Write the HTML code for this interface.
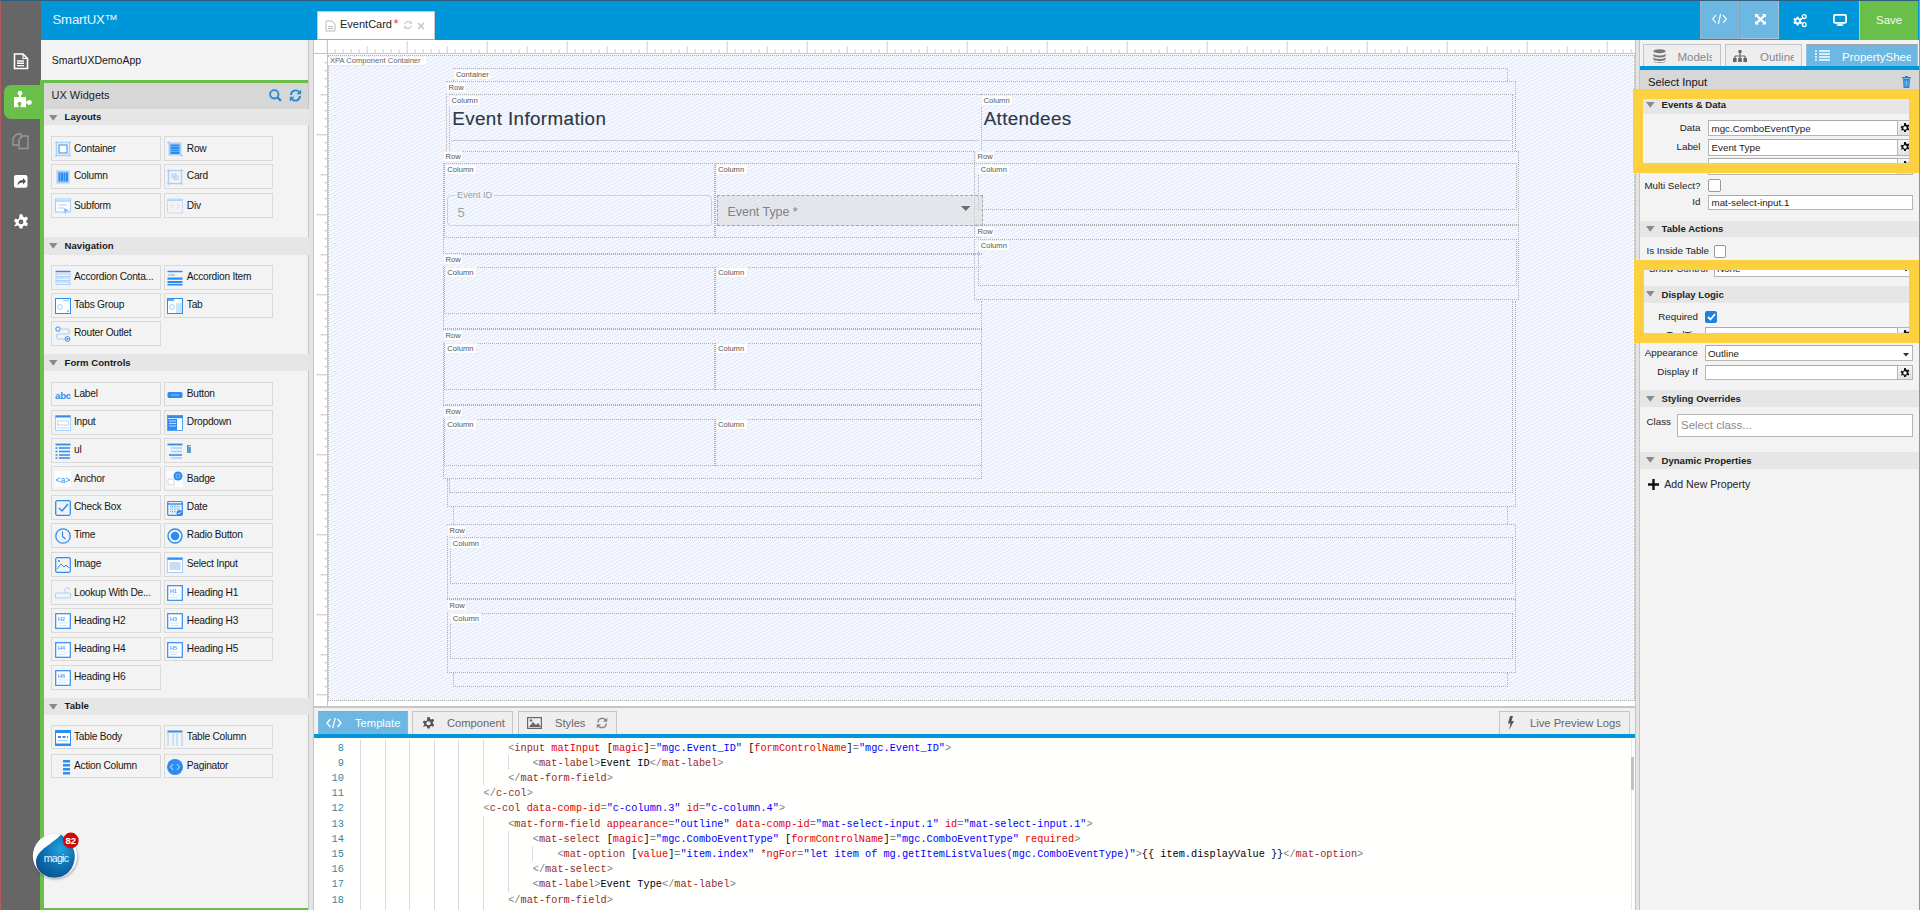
<!DOCTYPE html><html><head><meta charset="utf-8"><style>
*{margin:0;padding:0;box-sizing:border-box}
html,body{width:1920px;height:910px;overflow:hidden;background:#fff;font-family:"Liberation Sans",sans-serif}
.a{position:absolute}
.t{position:absolute;white-space:nowrap}
.m{position:absolute;white-space:pre;font-family:"Liberation Mono",monospace}
svg{position:absolute;overflow:visible}
</style></head><body><div class="a" style="left:0px;top:0px;width:40.5px;height:910px;background:#666;"></div>
<div class="a" style="left:0px;top:0px;width:1px;height:910px;background:#b75a5a;"></div>
<div class="a" style="left:40.5px;top:0px;width:1879.5px;height:40px;background:#0096da;"></div>
<div class="a" style="left:0px;top:0px;width:1920px;height:1px;background:#2f5f7e;"></div>
<div class="t" style="left:52.5px;top:12.83px;font-size:13.2px;line-height:13.2px;color:#e8f4fb;font-weight:normal;letter-spacing:-0.2px;">SmartUX™</div>
<div class="a" style="left:316.5px;top:11px;width:118.0px;height:29px;background:#fff;border:1px solid #c9c9c9;border-bottom:1px solid #aaa;"></div>
<svg style="left:325px;top:19.5px" width="11" height="12" viewBox="0 0 11 12"><path d="M1 1h6l3 3v7H1z" fill="none" stroke="#bbb" stroke-width="1"/><path d="M3 6.5h5M3 8.5h5" stroke="#bbb" stroke-width="1"/></svg>
<div class="t" style="left:340px;top:19.39px;font-size:11px;line-height:11px;color:#222;font-weight:normal;">EventCard</div>
<div class="t" style="left:393.5px;top:16.5px;font-size:13px;line-height:13px;color:#e0453a;font-weight:normal;">*</div>
<svg style="left:403px;top:20px" width="10" height="10" viewBox="0 0 10 10"><path d="M1.5 4.5A3.6 3.6 0 0 1 8 3M8.5 5.5A3.6 3.6 0 0 1 2 7" fill="none" stroke="#c8c8c8" stroke-width="1.3"/><path d="M8.8 0.8v3H5.8z" fill="#c8c8c8"/><path d="M1.2 9.2v-3h3z" fill="#c8c8c8"/></svg>
<svg style="left:417px;top:22px" width="8" height="8" viewBox="0 0 8 8"><path d="M1 1l6 6M7 1L1 7" stroke="#c4c4c4" stroke-width="1.6"/></svg>
<div class="a" style="left:1699.5px;top:1px;width:39.5px;height:37.5px;background:#6db8e2;border:1px solid #9ab3c2;border-top:none;"></div>
<div class="a" style="left:1739px;top:1px;width:40px;height:37.5px;background:#6db8e2;border:1px solid #a9c3d2;border-top:none;border-left:1.5px solid #9a9a9a;"></div>
<svg style="left:1712px;top:13px" width="15" height="12" viewBox="0 0 15 12"><path d="M4 2L0.8 6L4 10M11 2l3.2 4L11 10M8.6 0.8L6.4 11.2" fill="none" stroke="#fff" stroke-width="1.2"/></svg>
<svg style="left:1754.5px;top:13.8px" width="11" height="10.5" viewBox="0 0 11 10.5"><path d="M0 0h4.2L0 3.6zM11 0H6.8L11 3.6zM0 10.5h4.2L0 6.9zM11 10.5H6.8L11 6.9z" fill="#fff"/><path d="M1 1l9 8.5M10 1L1 9.5" stroke="#fff" stroke-width="2.3"/></svg>
<svg style="left:1792.5px;top:13.5px" width="15" height="13" viewBox="0 0 15 13"><g transform="translate(4.6 7) scale(0.36)"><path d="M-2.5-12h5l.8 3.6 2.6 1.5 3.5-1.2 2.5 4.3-2.8 2.5v3l2.8 2.5-2.5 4.3-3.5-1.2-2.6 1.5-.8 3.6h-5l-.8-3.6-2.6-1.5-3.5 1.2-2.5-4.3 2.8-2.5v-3l-2.8-2.5 2.5-4.3 3.5 1.2 2.6-1.5z" fill="#fff"/><circle r="4" fill="#0096da"/></g><circle cx="11.3" cy="2.6" r="1.9" fill="none" stroke="#fff" stroke-width="1.3"/><circle cx="11.3" cy="10.6" r="1.9" fill="none" stroke="#fff" stroke-width="1.3"/><path d="M7.5 5.5l2.3-1.6M7.5 8.3l2.3 1.4" stroke="#fff" stroke-width="1.2"/></svg>
<svg style="left:1833px;top:14px" width="14" height="12" viewBox="0 0 14 12"><rect x="0.9" y="0.9" width="12.2" height="8" rx="1.2" fill="none" stroke="#fff" stroke-width="1.8"/><rect x="5" y="9.5" width="4" height="1.5" fill="#fff"/><rect x="3.5" y="10.6" width="7" height="1.2" fill="#fff"/></svg>
<div class="a" style="left:1859px;top:1px;width:59px;height:39px;background:#6abf4b;border-left:1px solid #a8d890;"></div>
<div class="t" style="left:1876px;top:15.47px;font-size:11.5px;line-height:11.5px;color:#f4fbef;font-weight:normal;">Save</div>
<div class="a" style="left:1919px;top:0px;width:1px;height:910px;background:#8f8fc2;"></div>
<svg style="left:13px;top:53px" width="16" height="17" viewBox="0 0 16 17"><path d="M1.5 1h8.5l4.5 4.5V15.5H1.5z" fill="none" stroke="#fff" stroke-width="1.6"/><path d="M10 1v4.5h4.5" fill="none" stroke="#fff" stroke-width="1.2"/><path d="M4 8h7M4 10.3h7M4 12.6h7" stroke="#fff" stroke-width="1.4"/></svg>
<div class="a" style="left:3.7px;top:85px;width:39.3px;height:34px;background:#6abf4b;border-radius:7px 0 0 7px;"></div>
<svg style="left:8px;top:86px" width="30" height="30" viewBox="0 0 30 30"><rect x="6" y="11" width="12" height="10.2" fill="#fff"/><circle cx="12" cy="7.2" r="2.4" fill="#fff"/><rect x="11.1" y="8" width="1.8" height="3.5" fill="#fff"/><circle cx="21.4" cy="16.5" r="2.4" fill="#fff"/><rect x="17.5" y="15.6" width="3" height="1.8" fill="#fff"/><circle cx="11.5" cy="17.6" r="1.9" fill="#6abf4b"/><rect x="10.6" y="18" width="1.9" height="3.5" fill="#6abf4b"/></svg>
<svg style="left:12px;top:133px" width="18" height="17" viewBox="0 0 18 17"><path d="M1 5L5 1h4v4" fill="none" stroke="#9a9a9a" stroke-width="1.4"/><path d="M1 5v7h5" fill="none" stroke="#9a9a9a" stroke-width="1.4"/><path d="M7 6.5L10.5 3H16v12.5H7z" fill="none" stroke="#9a9a9a" stroke-width="1.4"/></svg>
<svg style="left:14px;top:174.5px" width="14" height="13" viewBox="0 0 14 13"><rect x="0" y="0" width="13.5" height="12.8" rx="2" fill="#fff"/><path d="M3.5 10.5C3.5 6.5 6 5 9 5V3l3 3.2-3 3.2V7.5C6.5 7.5 4.8 8.3 3.5 10.5z" fill="#555"/></svg>
<svg style="left:13px;top:213.5px" width="16" height="16" viewBox="0 0 16 16"><path d="M6.6 0h2.8l.5 2.2 1.6.9 2.1-.8 1.4 2.4-1.7 1.5v1.8l1.7 1.5-1.4 2.4-2.1-.8-1.6.9-.5 2.2H6.6l-.5-2.2-1.6-.9-2.1.8L1 11.5l1.7-1.5V8.2L1 6.7l1.4-2.4 2.1.8 1.6-.9z" fill="#fff" transform="translate(0 0.3)"/><circle cx="8" cy="7.9" r="2.4" fill="#666"/></svg>
<div class="a" style="left:40.5px;top:40px;width:268.0px;height:870px;background:#f3f3f3;"></div>
<div class="t" style="left:51.8px;top:54.81px;font-size:10.5px;line-height:10.5px;color:#161616;font-weight:normal;">SmartUXDemoApp</div>
<div class="a" style="left:40px;top:80px;width:268.5px;height:3px;background:#6abf4b;"></div>
<div class="a" style="left:40px;top:80px;width:3.5px;height:830px;background:#6abf4b;"></div>
<div class="a" style="left:40px;top:907.5px;width:268.5px;height:2.5px;background:#6abf4b;"></div>
<div class="a" style="left:43.5px;top:83px;width:265.0px;height:25.5px;background:#d7d7d7;"></div>
<div class="t" style="left:51.5px;top:89.89px;font-size:11px;line-height:11px;color:#1e1e1e;font-weight:normal;">UX Widgets</div>
<svg style="left:269px;top:88.5px" width="13" height="13" viewBox="0 0 13 13"><circle cx="5.3" cy="5.3" r="4.2" fill="none" stroke="#1f8ad6" stroke-width="1.8"/><path d="M8.3 8.3l3.6 3.6" stroke="#1f8ad6" stroke-width="2.2"/></svg>
<svg style="left:289px;top:88.5px" width="13" height="13" viewBox="0 0 13 13"><path d="M2 6A4.6 4.6 0 0 1 10.2 3.2M11 7A4.6 4.6 0 0 1 2.8 9.8" fill="none" stroke="#1f8ad6" stroke-width="1.9"/><path d="M12.2 0.6v4.6H7.6z" fill="#1f8ad6"/><path d="M0.8 12.4V7.8h4.6z" fill="#1f8ad6"/></svg>
<div class="a" style="left:308px;top:40px;width:5.5px;height:870px;background:#e4e4e4;border-left:1.5px solid #c4c4c4;border-right:1.5px solid #c4c4c4;"></div>
<div class="a" style="left:43.5px;top:108.5px;width:265.0px;height:16.9px;background:#e6e6e6;"></div>
<svg style="left:49px;top:114.5px" width="9" height="6" viewBox="0 0 9 6"><path d="M0 0h8.5L4.25 5.7z" fill="#8a8a8a"/></svg>
<div class="t" style="left:64.6px;top:112.27px;font-size:9.6px;line-height:9.6px;color:#1a1a1a;font-weight:bold;">Layouts</div>
<div class="a" style="left:51px;top:136.4px;width:109.5px;height:24.9px;border:1px solid #dadada;background:#f3f3f3;"></div>
<svg style="left:54.5px;top:141.4px" width="16" height="16" viewBox="0 0 16 16"><rect x="1.5" y="1.5" width="13" height="13" fill="none" stroke="#a9d0fb" stroke-width="1.4"/><rect x="4" y="4" width="8" height="8" fill="#fff" stroke="#2d8cf2" stroke-width="1"/><circle cx="1.5" cy="1.5" r="1.2" fill="#a9d0fb"/><circle cx="14.5" cy="1.5" r="1.2" fill="#a9d0fb"/><circle cx="1.5" cy="14.5" r="1.2" fill="#a9d0fb"/><circle cx="14.5" cy="14.5" r="1.2" fill="#a9d0fb"/></svg>
<div class="t" style="left:74px;top:143.67px;font-size:10.2px;line-height:10.2px;color:#161616;font-weight:normal;letter-spacing:-0.25px;">Container</div>
<div class="a" style="left:163.8px;top:136.4px;width:109.6px;height:24.9px;border:1px solid #dadada;background:#f3f3f3;"></div>
<svg style="left:167.3px;top:141.4px" width="16" height="16" viewBox="0 0 16 16"><rect x="1.5" y="1.5" width="13" height="13" fill="#a9d0fb"/><path d="M3.5 4.5h9M3.5 7h9M3.5 9.5h9M3.5 12h9" stroke="#2d8cf2" stroke-width="2"/><circle cx="1.5" cy="1.5" r="1.2" fill="#a9d0fb"/><circle cx="14.5" cy="14.5" r="1.2" fill="#a9d0fb"/></svg>
<div class="t" style="left:186.8px;top:143.67px;font-size:10.2px;line-height:10.2px;color:#161616;font-weight:normal;letter-spacing:-0.25px;">Row</div>
<div class="a" style="left:51px;top:164.2px;width:109.5px;height:24.9px;border:1px solid #dadada;background:#f3f3f3;"></div>
<svg style="left:54.5px;top:169.2px" width="16" height="16" viewBox="0 0 16 16"><rect x="1.5" y="1.5" width="13" height="13" fill="#a9d0fb"/><path d="M4.5 3.5v9M7 3.5v9M9.5 3.5v9M12 3.5v9" stroke="#2d8cf2" stroke-width="2"/></svg>
<div class="t" style="left:74px;top:171.47px;font-size:10.2px;line-height:10.2px;color:#161616;font-weight:normal;letter-spacing:-0.25px;">Column</div>
<div class="a" style="left:163.8px;top:164.2px;width:109.6px;height:24.9px;border:1px solid #dadada;background:#f3f3f3;"></div>
<svg style="left:167.3px;top:169.2px" width="16" height="16" viewBox="0 0 16 16"><rect x="1.5" y="1.5" width="13" height="13" fill="none" stroke="#a9d0fb" stroke-width="1.3"/><rect x="5" y="5" width="4" height="3.5" fill="none" stroke="#a9d0fb"/><rect x="7" y="7" width="4" height="3.5" fill="none" stroke="#a9d0fb"/><circle cx="1.5" cy="1.5" r="1.3" fill="#a9d0fb"/><circle cx="14.5" cy="1.5" r="1.3" fill="#a9d0fb"/><circle cx="1.5" cy="14.5" r="1.3" fill="#a9d0fb"/><circle cx="14.5" cy="14.5" r="1.3" fill="#a9d0fb"/></svg>
<div class="t" style="left:186.8px;top:171.47px;font-size:10.2px;line-height:10.2px;color:#161616;font-weight:normal;letter-spacing:-0.25px;">Card</div>
<div class="a" style="left:51px;top:193.4px;width:109.5px;height:24.9px;border:1px solid #dadada;background:#f3f3f3;"></div>
<svg style="left:54.5px;top:198.4px" width="16" height="16" viewBox="0 0 16 16"><rect x="0.5" y="1" width="15" height="13" fill="#fff" stroke="#a9d0fb" stroke-width="1.2"/><path d="M0.5 3h15" stroke="#a9d0fb" stroke-width="1.5"/><path d="M3 7h9M3 10h6" stroke="#a9d0fb" stroke-width="1"/><path d="M9 10l5 2.5-3 1-1 2.5z" fill="#2d8cf2" opacity=".6"/></svg>
<div class="t" style="left:74px;top:200.67px;font-size:10.2px;line-height:10.2px;color:#161616;font-weight:normal;letter-spacing:-0.25px;">Subform</div>
<div class="a" style="left:163.8px;top:193.4px;width:109.6px;height:24.9px;border:1px solid #dadada;background:#f3f3f3;"></div>
<svg style="left:167.3px;top:198.4px" width="16" height="16" viewBox="0 0 16 16"><rect x="0.5" y="1" width="15" height="14" fill="none" stroke="#a9d0fb" stroke-width="1" stroke-dasharray="1.5 1"/><path d="M0.5 2.2h15" stroke="#a9d0fb" stroke-width="1.5"/><path d="M6 6.5L4 8.5l2 2M10 6.5l2 2-2 2" fill="none" stroke="#c9b8f0" stroke-width=".8"/></svg>
<div class="t" style="left:186.8px;top:200.67px;font-size:10.2px;line-height:10.2px;color:#161616;font-weight:normal;letter-spacing:-0.25px;">Div</div>
<div class="a" style="left:43.5px;top:237.4px;width:265.0px;height:17.2px;background:#e6e6e6;"></div>
<svg style="left:49px;top:243.4px" width="9" height="6" viewBox="0 0 9 6"><path d="M0 0h8.5L4.25 5.7z" fill="#8a8a8a"/></svg>
<div class="t" style="left:64.6px;top:241.17px;font-size:9.6px;line-height:9.6px;color:#1a1a1a;font-weight:bold;">Navigation</div>
<div class="a" style="left:51px;top:265.2px;width:109.5px;height:24.9px;border:1px solid #dadada;background:#f3f3f3;"></div>
<svg style="left:54.5px;top:270.2px" width="16" height="16" viewBox="0 0 16 16"><path d="M0.5 1.5h15" stroke="#2d8cf2" stroke-width="1.5"/><rect x="1" y="4" width="14" height="2.5" fill="none" stroke="#a9d0fb"/><rect x="1" y="8" width="14" height="2.5" fill="none" stroke="#a9d0fb"/><rect x="1" y="12" width="14" height="2.5" fill="none" stroke="#a9d0fb"/></svg>
<div class="t" style="left:74px;top:272.47px;font-size:10.2px;line-height:10.2px;color:#161616;font-weight:normal;letter-spacing:-0.25px;">Accordion Conta...</div>
<div class="a" style="left:163.8px;top:265.2px;width:109.6px;height:24.9px;border:1px solid #dadada;background:#f3f3f3;"></div>
<svg style="left:167.3px;top:270.2px" width="16" height="16" viewBox="0 0 16 16"><path d="M0.5 1.5h15" stroke="#2d8cf2" stroke-width="1.5"/><rect x="1" y="4" width="7" height="2" fill="#a9d0fb"/><rect x="0.5" y="7.5" width="15" height="2.2" fill="#2d8cf2"/><rect x="0.5" y="11" width="15" height="2.2" fill="#2d8cf2"/><rect x="0.5" y="14" width="15" height="1.5" fill="#2d8cf2"/></svg>
<div class="t" style="left:186.8px;top:272.47px;font-size:10.2px;line-height:10.2px;color:#161616;font-weight:normal;letter-spacing:-0.25px;">Accordion Item</div>
<div class="a" style="left:51px;top:293.2px;width:109.5px;height:24.9px;border:1px solid #dadada;background:#f3f3f3;"></div>
<svg style="left:54.5px;top:298.2px" width="16" height="16" viewBox="0 0 16 16"><rect x="0.5" y="0.5" width="15" height="15" fill="#fff" stroke="#2d8cf2" stroke-width="1"/><path d="M8 2.5h6" stroke="#a9d0fb" stroke-width="1.4"/><circle cx="5" cy="9" r="2.5" fill="none" stroke="#a9d0fb"/><path d="M12 13h2" stroke="#2d8cf2"/></svg>
<div class="t" style="left:74px;top:300.47px;font-size:10.2px;line-height:10.2px;color:#161616;font-weight:normal;letter-spacing:-0.25px;">Tabs Group</div>
<div class="a" style="left:163.8px;top:293.2px;width:109.6px;height:24.9px;border:1px solid #dadada;background:#f3f3f3;"></div>
<svg style="left:167.3px;top:298.2px" width="16" height="16" viewBox="0 0 16 16"><rect x="0.5" y="0.5" width="15" height="15" fill="#fff" stroke="#2d8cf2" stroke-width="1"/><path d="M1 2h6" stroke="#2d8cf2" stroke-width="1.5"/><circle cx="5" cy="9" r="2.5" fill="none" stroke="#a9d0fb"/><rect x="9" y="5" width="6" height="10" fill="#a9d0fb" opacity=".6"/></svg>
<div class="t" style="left:186.8px;top:300.47px;font-size:10.2px;line-height:10.2px;color:#161616;font-weight:normal;letter-spacing:-0.25px;">Tab</div>
<div class="a" style="left:51px;top:321.2px;width:109.5px;height:24.9px;border:1px solid #dadada;background:#f3f3f3;"></div>
<svg style="left:54.5px;top:326.2px" width="16" height="16" viewBox="0 0 16 16"><circle cx="3" cy="3" r="2.2" fill="none" stroke="#2d8cf2"/><path d="M5 3h7a2.5 2.5 0 0 1 0 5H4a2.5 2.5 0 0 0 0 5h6" fill="none" stroke="#a9d0fb" stroke-width="1.1"/><circle cx="12.5" cy="13" r="2.4" fill="none" stroke="#2d8cf2"/><circle cx="12.5" cy="13" r="1" fill="#2d8cf2"/></svg>
<div class="t" style="left:74px;top:328.47px;font-size:10.2px;line-height:10.2px;color:#161616;font-weight:normal;letter-spacing:-0.25px;">Router Outlet</div>
<div class="a" style="left:43.5px;top:354.1px;width:265.0px;height:17.2px;background:#e6e6e6;"></div>
<svg style="left:49px;top:360.1px" width="9" height="6" viewBox="0 0 9 6"><path d="M0 0h8.5L4.25 5.7z" fill="#8a8a8a"/></svg>
<div class="t" style="left:64.6px;top:357.87px;font-size:9.6px;line-height:9.6px;color:#1a1a1a;font-weight:bold;">Form Controls</div>
<div class="a" style="left:51px;top:381.5px;width:109.5px;height:24.9px;border:1px solid #dadada;background:#f3f3f3;"></div>
<svg style="left:54.5px;top:386.5px" width="16" height="16" viewBox="0 0 16 16"><text x="0" y="12.3" font-family="Liberation Sans" font-weight="bold" font-size="9.6" fill="#2d8cf2" letter-spacing="-0.2">abc</text></svg>
<div class="t" style="left:74px;top:388.77px;font-size:10.2px;line-height:10.2px;color:#161616;font-weight:normal;letter-spacing:-0.25px;">Label</div>
<div class="a" style="left:163.8px;top:381.5px;width:109.6px;height:24.9px;border:1px solid #dadada;background:#f3f3f3;"></div>
<svg style="left:167.3px;top:386.5px" width="16" height="16" viewBox="0 0 16 16"><rect x="0.5" y="5" width="15" height="6" rx="1.5" fill="#2d8cf2"/><path d="M4 8h8" stroke="#a9d0fb" stroke-width=".8"/></svg>
<div class="t" style="left:186.8px;top:388.77px;font-size:10.2px;line-height:10.2px;color:#161616;font-weight:normal;letter-spacing:-0.25px;">Button</div>
<div class="a" style="left:51px;top:410px;width:109.5px;height:24.9px;border:1px solid #dadada;background:#f3f3f3;"></div>
<svg style="left:54.5px;top:415px" width="16" height="16" viewBox="0 0 16 16"><rect x="0.5" y="0.5" width="15" height="15" fill="#fff" stroke="#a9d0fb" stroke-width="1"/><path d="M0.5 1.5h15" stroke="#2d8cf2" stroke-width="2"/><rect x="2.5" y="6" width="11" height="4" fill="none" stroke="#a9d0fb" stroke-width=".8"/><path d="M2 13h12" stroke="#a9d0fb" stroke-width=".8"/></svg>
<div class="t" style="left:74px;top:417.27px;font-size:10.2px;line-height:10.2px;color:#161616;font-weight:normal;letter-spacing:-0.25px;">Input</div>
<div class="a" style="left:163.8px;top:410px;width:109.6px;height:24.9px;border:1px solid #dadada;background:#f3f3f3;"></div>
<svg style="left:167.3px;top:415px" width="16" height="16" viewBox="0 0 16 16"><rect x="0.5" y="0.5" width="15" height="15" fill="#fff" stroke="#2d8cf2" stroke-width=".8"/><path d="M0.5 2h15" stroke="#2d8cf2" stroke-width="2.5"/><rect x="1" y="4" width="9" height="11" fill="#2d8cf2"/><path d="M2 6h7M2 8.5h7M2 11h7" stroke="#fff" stroke-width=".7"/></svg>
<div class="t" style="left:186.8px;top:417.27px;font-size:10.2px;line-height:10.2px;color:#161616;font-weight:normal;letter-spacing:-0.25px;">Dropdown</div>
<div class="a" style="left:51px;top:438.2px;width:109.5px;height:24.9px;border:1px solid #dadada;background:#f3f3f3;"></div>
<svg style="left:54.5px;top:443.2px" width="16" height="16" viewBox="0 0 16 16"><path d="M0.5 1.5h15" stroke="#2d8cf2" stroke-width="1.8"/><path d="M4 5h11M4 8.5h11M4 12h11M4 15h11" stroke="#2d8cf2" stroke-width="1.6"/><path d="M0.5 5h2M0.5 8.5h2M0.5 12h2M0.5 15h2" stroke="#2d8cf2" stroke-width="1.6"/></svg>
<div class="t" style="left:74px;top:445.47px;font-size:10.2px;line-height:10.2px;color:#161616;font-weight:normal;letter-spacing:-0.25px;">ul</div>
<div class="a" style="left:163.8px;top:438.2px;width:109.6px;height:24.9px;border:1px solid #dadada;background:#f3f3f3;"></div>
<svg style="left:167.3px;top:443.2px" width="16" height="16" viewBox="0 0 16 16"><path d="M0.5 1.5h15" stroke="#2d8cf2" stroke-width="1.8"/><path d="M4 5h11M4 8.5h11M4 15h11" stroke="#a9d0fb" stroke-width="1.4"/><path d="M2 12h13" stroke="#2d8cf2" stroke-width="1.6"/></svg>
<div class="t" style="left:186.8px;top:445.47px;font-size:10.2px;line-height:10.2px;color:#161616;font-weight:normal;letter-spacing:-0.25px;">li</div>
<div class="a" style="left:51px;top:466.3px;width:109.5px;height:24.9px;border:1px solid #dadada;background:#f3f3f3;"></div>
<svg style="left:54.5px;top:471.3px" width="16" height="16" viewBox="0 0 16 16"><rect x="0" y="0" width="16" height="16" fill="#fff"/><text x="0.5" y="11.5" font-family="Liberation Sans" font-size="8.5" fill="#2d8cf2">&lt;a&gt;</text></svg>
<div class="t" style="left:74px;top:473.57px;font-size:10.2px;line-height:10.2px;color:#161616;font-weight:normal;letter-spacing:-0.25px;">Anchor</div>
<div class="a" style="left:163.8px;top:466.3px;width:109.6px;height:24.9px;border:1px solid #dadada;background:#f3f3f3;"></div>
<svg style="left:167.3px;top:471.3px" width="16" height="16" viewBox="0 0 16 16"><rect x="0" y="0" width="16" height="16" fill="#fff"/><rect x="1" y="8" width="6" height="6" fill="none" stroke="#ccc" stroke-width=".8"/><circle cx="11" cy="5" r="4.5" fill="#2d8cf2"/><circle cx="11" cy="5" r="2" fill="none" stroke="#a9d0fb" stroke-width=".7"/></svg>
<div class="t" style="left:186.8px;top:473.57px;font-size:10.2px;line-height:10.2px;color:#161616;font-weight:normal;letter-spacing:-0.25px;">Badge</div>
<div class="a" style="left:51px;top:494.9px;width:109.5px;height:24.9px;border:1px solid #dadada;background:#f3f3f3;"></div>
<svg style="left:54.5px;top:499.9px" width="16" height="16" viewBox="0 0 16 16"><rect x="0.7" y="0.7" width="14.6" height="14.6" rx="1.5" fill="none" stroke="#2d8cf2" stroke-width="1.3"/><path d="M4 8l3 3 6-7" fill="none" stroke="#2d8cf2" stroke-width="1.5"/></svg>
<div class="t" style="left:74px;top:502.17px;font-size:10.2px;line-height:10.2px;color:#161616;font-weight:normal;letter-spacing:-0.25px;">Check Box</div>
<div class="a" style="left:163.8px;top:494.9px;width:109.6px;height:24.9px;border:1px solid #dadada;background:#f3f3f3;"></div>
<svg style="left:167.3px;top:499.9px" width="16" height="16" viewBox="0 0 16 16"><rect x="0.7" y="1.5" width="14.6" height="13.8" rx="1" fill="none" stroke="#2d8cf2" stroke-width="1.2"/><path d="M0.7 4h14.6" stroke="#2d8cf2" stroke-width="1.4"/><path d="M3 6.5h10M3 9h10M3 11.5h6M5 5v9M8 5v9M11 5v5" stroke="#2d8cf2" stroke-width=".7" stroke-dasharray="1 1.2"/><circle cx="12.5" cy="13" r="3" fill="#2d8cf2"/><path d="M11 13l1 1 2-2" stroke="#fff" stroke-width=".8" fill="none"/></svg>
<div class="t" style="left:186.8px;top:502.17px;font-size:10.2px;line-height:10.2px;color:#161616;font-weight:normal;letter-spacing:-0.25px;">Date</div>
<div class="a" style="left:51px;top:523.2px;width:109.5px;height:24.9px;border:1px solid #dadada;background:#f3f3f3;"></div>
<svg style="left:54.5px;top:528.2px" width="16" height="16" viewBox="0 0 16 16"><circle cx="8" cy="8" r="7.2" fill="none" stroke="#2d8cf2" stroke-width="1.3"/><path d="M7.5 3.5V8.5l3 2.5" fill="none" stroke="#2d8cf2" stroke-width="1.2"/></svg>
<div class="t" style="left:74px;top:530.47px;font-size:10.2px;line-height:10.2px;color:#161616;font-weight:normal;letter-spacing:-0.25px;">Time</div>
<div class="a" style="left:163.8px;top:523.2px;width:109.6px;height:24.9px;border:1px solid #dadada;background:#f3f3f3;"></div>
<svg style="left:167.3px;top:528.2px" width="16" height="16" viewBox="0 0 16 16"><circle cx="8" cy="8" r="7" fill="none" stroke="#2d8cf2" stroke-width="1.4"/><circle cx="8" cy="8" r="4.3" fill="#2d8cf2"/></svg>
<div class="t" style="left:186.8px;top:530.47px;font-size:10.2px;line-height:10.2px;color:#161616;font-weight:normal;letter-spacing:-0.25px;">Radio Button</div>
<div class="a" style="left:51px;top:552px;width:109.5px;height:24.9px;border:1px solid #dadada;background:#f3f3f3;"></div>
<svg style="left:54.5px;top:557px" width="16" height="16" viewBox="0 0 16 16"><rect x="0.7" y="0.7" width="14.6" height="14.6" rx="1.5" fill="none" stroke="#2d8cf2" stroke-width="1.2"/><path d="M2 12l4-5 3 3 2-2 3 3" fill="none" stroke="#2d8cf2" stroke-width="1"/><circle cx="4" cy="4" r="1" fill="#2d8cf2"/></svg>
<div class="t" style="left:74px;top:559.27px;font-size:10.2px;line-height:10.2px;color:#161616;font-weight:normal;letter-spacing:-0.25px;">Image</div>
<div class="a" style="left:163.8px;top:552px;width:109.6px;height:24.9px;border:1px solid #dadada;background:#f3f3f3;"></div>
<svg style="left:167.3px;top:557px" width="16" height="16" viewBox="0 0 16 16"><rect x="0.5" y="0.5" width="15" height="15" fill="#fff" stroke="#a9d0fb" stroke-width="1"/><path d="M0.5 1.8h15" stroke="#2d8cf2" stroke-width="2"/><rect x="2.5" y="5" width="11" height="8" fill="#c7dcf5"/></svg>
<div class="t" style="left:186.8px;top:559.27px;font-size:10.2px;line-height:10.2px;color:#161616;font-weight:normal;letter-spacing:-0.25px;">Select Input</div>
<div class="a" style="left:51px;top:580.4px;width:109.5px;height:24.9px;border:1px solid #dadada;background:#f3f3f3;"></div>
<svg style="left:54.5px;top:585.4px" width="16" height="16" viewBox="0 0 16 16"><rect x="0.5" y="8" width="15" height="5" rx="1" fill="none" stroke="#a9d0fb" stroke-width="1.1"/><path d="M10 8V4l3-2 2 3" fill="none" stroke="#a9d0fb" stroke-width="1"/></svg>
<div class="t" style="left:74px;top:587.67px;font-size:10.2px;line-height:10.2px;color:#161616;font-weight:normal;letter-spacing:-0.25px;">Lookup With De...</div>
<div class="a" style="left:163.8px;top:580.4px;width:109.6px;height:24.9px;border:1px solid #dadada;background:#f3f3f3;"></div>
<svg style="left:167.3px;top:585.4px" width="16" height="16" viewBox="0 0 16 16"><rect x="0.7" y="0.7" width="14.6" height="14.6" fill="#fff" stroke="#2d8cf2" stroke-width="1.2"/><text x="3" y="7.5" font-family="Liberation Sans" font-weight="bold" font-size="5.5" fill="#2d8cf2" opacity=".8">H1</text><path d="M3 10h10M3 12.5h8" stroke="#d6e6f8" stroke-width="1"/></svg>
<div class="t" style="left:186.8px;top:587.67px;font-size:10.2px;line-height:10.2px;color:#161616;font-weight:normal;letter-spacing:-0.25px;">Heading H1</div>
<div class="a" style="left:51px;top:608.3px;width:109.5px;height:24.9px;border:1px solid #dadada;background:#f3f3f3;"></div>
<svg style="left:54.5px;top:613.3px" width="16" height="16" viewBox="0 0 16 16"><rect x="0.7" y="0.7" width="14.6" height="14.6" fill="#fff" stroke="#2d8cf2" stroke-width="1.2"/><text x="3" y="7.5" font-family="Liberation Sans" font-weight="bold" font-size="5.5" fill="#2d8cf2" opacity=".8">H2</text><path d="M3 10h10M3 12.5h8" stroke="#d6e6f8" stroke-width="1"/></svg>
<div class="t" style="left:74px;top:615.57px;font-size:10.2px;line-height:10.2px;color:#161616;font-weight:normal;letter-spacing:-0.25px;">Heading H2</div>
<div class="a" style="left:163.8px;top:608.3px;width:109.6px;height:24.9px;border:1px solid #dadada;background:#f3f3f3;"></div>
<svg style="left:167.3px;top:613.3px" width="16" height="16" viewBox="0 0 16 16"><rect x="0.7" y="0.7" width="14.6" height="14.6" fill="#fff" stroke="#2d8cf2" stroke-width="1.2"/><text x="3" y="7.5" font-family="Liberation Sans" font-weight="bold" font-size="5.5" fill="#2d8cf2" opacity=".8">H3</text><path d="M3 10h10M3 12.5h8" stroke="#d6e6f8" stroke-width="1"/></svg>
<div class="t" style="left:186.8px;top:615.57px;font-size:10.2px;line-height:10.2px;color:#161616;font-weight:normal;letter-spacing:-0.25px;">Heading H3</div>
<div class="a" style="left:51px;top:636.6px;width:109.5px;height:24.9px;border:1px solid #dadada;background:#f3f3f3;"></div>
<svg style="left:54.5px;top:641.6px" width="16" height="16" viewBox="0 0 16 16"><rect x="0.7" y="0.7" width="14.6" height="14.6" fill="#fff" stroke="#2d8cf2" stroke-width="1.2"/><text x="3" y="7.5" font-family="Liberation Sans" font-weight="bold" font-size="5.5" fill="#2d8cf2" opacity=".8">H4</text><path d="M3 10h10M3 12.5h8" stroke="#d6e6f8" stroke-width="1"/></svg>
<div class="t" style="left:74px;top:643.87px;font-size:10.2px;line-height:10.2px;color:#161616;font-weight:normal;letter-spacing:-0.25px;">Heading H4</div>
<div class="a" style="left:163.8px;top:636.6px;width:109.6px;height:24.9px;border:1px solid #dadada;background:#f3f3f3;"></div>
<svg style="left:167.3px;top:641.6px" width="16" height="16" viewBox="0 0 16 16"><rect x="0.7" y="0.7" width="14.6" height="14.6" fill="#fff" stroke="#2d8cf2" stroke-width="1.2"/><text x="3" y="7.5" font-family="Liberation Sans" font-weight="bold" font-size="5.5" fill="#2d8cf2" opacity=".8">H5</text><path d="M3 10h10M3 12.5h8" stroke="#d6e6f8" stroke-width="1"/></svg>
<div class="t" style="left:186.8px;top:643.87px;font-size:10.2px;line-height:10.2px;color:#161616;font-weight:normal;letter-spacing:-0.25px;">Heading H5</div>
<div class="a" style="left:51px;top:664.8px;width:109.5px;height:24.9px;border:1px solid #dadada;background:#f3f3f3;"></div>
<svg style="left:54.5px;top:669.8px" width="16" height="16" viewBox="0 0 16 16"><rect x="0.7" y="0.7" width="14.6" height="14.6" fill="#fff" stroke="#2d8cf2" stroke-width="1.2"/><text x="3" y="7.5" font-family="Liberation Sans" font-weight="bold" font-size="5.5" fill="#2d8cf2" opacity=".8">H6</text><path d="M3 10h10M3 12.5h8" stroke="#d6e6f8" stroke-width="1"/></svg>
<div class="t" style="left:74px;top:672.07px;font-size:10.2px;line-height:10.2px;color:#161616;font-weight:normal;letter-spacing:-0.25px;">Heading H6</div>
<div class="a" style="left:43.5px;top:697.7px;width:265.0px;height:17.7px;background:#e6e6e6;"></div>
<svg style="left:49px;top:703.7px" width="9" height="6" viewBox="0 0 9 6"><path d="M0 0h8.5L4.25 5.7z" fill="#8a8a8a"/></svg>
<div class="t" style="left:64.6px;top:701.47px;font-size:9.6px;line-height:9.6px;color:#1a1a1a;font-weight:bold;">Table</div>
<div class="a" style="left:51px;top:724.6px;width:109.5px;height:24.9px;border:1px solid #dadada;background:#f3f3f3;"></div>
<svg style="left:54.5px;top:729.6px" width="16" height="16" viewBox="0 0 16 16"><rect x="0.5" y="0.5" width="15" height="15" fill="#fff" stroke="#2d8cf2" stroke-width="1"/><path d="M0.5 2h15M0.5 14.5h15" stroke="#2d8cf2" stroke-width="2"/><path d="M3 7h10" stroke="#2d8cf2" stroke-width="2" stroke-dasharray="3 1.5"/><path d="M3 10.5h10" stroke="#a9d0fb" stroke-width="1.2"/></svg>
<div class="t" style="left:74px;top:731.87px;font-size:10.2px;line-height:10.2px;color:#161616;font-weight:normal;letter-spacing:-0.25px;">Table Body</div>
<div class="a" style="left:163.8px;top:724.6px;width:109.6px;height:24.9px;border:1px solid #dadada;background:#f3f3f3;"></div>
<svg style="left:167.3px;top:729.6px" width="16" height="16" viewBox="0 0 16 16"><path d="M0.5 1.5h15" stroke="#2d8cf2" stroke-width="2"/><path d="M1 2v14M6 2v14M10 2v14M15 2v14" stroke="#a9d0fb" stroke-width="1.1"/></svg>
<div class="t" style="left:186.8px;top:731.87px;font-size:10.2px;line-height:10.2px;color:#161616;font-weight:normal;letter-spacing:-0.25px;">Table Column</div>
<div class="a" style="left:51px;top:753.6px;width:109.5px;height:24.9px;border:1px solid #dadada;background:#f3f3f3;"></div>
<svg style="left:54.5px;top:758.6px" width="16" height="16" viewBox="0 0 16 16"><path d="M0.5 2h5M0.5 6h5M0.5 10h5M0.5 14h5" stroke="#e6eefb" stroke-width="1.2"/><rect x="8" y="1" width="7" height="2.5" fill="#2d8cf2"/><rect x="8" y="5" width="7" height="2.5" fill="#2d8cf2"/><rect x="8" y="9" width="7" height="2.5" fill="#2d8cf2"/><rect x="8" y="13" width="7" height="2.5" fill="#2d8cf2"/></svg>
<div class="t" style="left:74px;top:760.87px;font-size:10.2px;line-height:10.2px;color:#161616;font-weight:normal;letter-spacing:-0.25px;">Action Column</div>
<div class="a" style="left:163.8px;top:753.6px;width:109.6px;height:24.9px;border:1px solid #dadada;background:#f3f3f3;"></div>
<svg style="left:167.3px;top:758.6px" width="16" height="16" viewBox="0 0 16 16"><circle cx="8" cy="8" r="8" fill="#2d8cf2"/><path d="M6 5L3.5 8 6 11M10 5l2.5 3-2.5 3" fill="none" stroke="#cfe4fd" stroke-width="1"/></svg>
<div class="t" style="left:186.8px;top:760.87px;font-size:10.2px;line-height:10.2px;color:#161616;font-weight:normal;letter-spacing:-0.25px;">Paginator</div>
<svg style="left:31px;top:832px" width="50" height="50" viewBox="0 0 50 50"><defs><radialGradient id="mg" cx="0.62" cy="0.35" r="0.75"><stop offset="0" stop-color="#1ea3e0"/><stop offset="0.55" stop-color="#0f6fb0"/><stop offset="1" stop-color="#0a4f8c"/></radialGradient><filter id="sh" x="-20%" y="-20%" width="140%" height="140%"><feGaussianBlur stdDeviation="1.2"/></filter></defs><circle cx="24.5" cy="25" r="22.5" fill="#000" opacity=".28" filter="url(#sh)"/><circle cx="24" cy="24" r="22.2" fill="#fdfdfd"/><path d="M30 2.6C22 12 5 18 5 30C5 40 14 45.7 24 45.7C36 45.7 43.8 36 43.8 24C43.8 14 36 8 30 2.6z" fill="url(#mg)"/><text x="25" y="29.5" text-anchor="middle" font-family="Liberation Sans" font-size="10.5" fill="#f2f8fc" letter-spacing="-0.7">magic</text><circle cx="39.8" cy="8.5" r="7.9" fill="#cc0a0a"/><text x="39.8" y="12" text-anchor="middle" font-family="Liberation Sans" font-weight="bold" font-size="9.5" fill="#fff">82</text></svg>
<div class="a" style="left:313.5px;top:40px;width:1321.5px;height:666px;background:#fff;"></div>
<div class="a" style="left:327.5px;top:54.5px;width:1307.0px;height:646.5px;background:repeating-linear-gradient(151deg,#fdfdff 0px,#e3eafc 1.6px,#fdfdff 3.2px);"></div>
<div class="a" style="left:313.5px;top:53.3px;width:1321.5px;height:1.2px;background:#c4c4c4;"></div>
<div class="a" style="left:326.6px;top:40px;width:1.3px;height:666px;background:#c4c4c4;"></div>
<svg style="left:313.5px;top:40px" width="1322" height="14" viewBox="0 0 1322 14" fill="#cdcdcd"><rect x="12.70" y="1.30" width="1" height="12"/><rect x="20.70" y="9.30" width="1" height="4"/><rect x="28.70" y="9.30" width="1" height="4"/><rect x="36.70" y="9.30" width="1" height="4"/><rect x="44.70" y="9.30" width="1" height="4"/><rect x="52.70" y="6.30" width="1" height="7"/><rect x="60.70" y="9.30" width="1" height="4"/><rect x="68.70" y="9.30" width="1" height="4"/><rect x="76.70" y="9.30" width="1" height="4"/><rect x="84.70" y="9.30" width="1" height="4"/><rect x="92.70" y="1.30" width="1" height="12"/><rect x="100.70" y="9.30" width="1" height="4"/><rect x="108.70" y="9.30" width="1" height="4"/><rect x="116.70" y="9.30" width="1" height="4"/><rect x="124.70" y="9.30" width="1" height="4"/><rect x="132.70" y="6.30" width="1" height="7"/><rect x="140.70" y="9.30" width="1" height="4"/><rect x="148.70" y="9.30" width="1" height="4"/><rect x="156.70" y="9.30" width="1" height="4"/><rect x="164.70" y="9.30" width="1" height="4"/><rect x="172.70" y="1.30" width="1" height="12"/><rect x="180.70" y="9.30" width="1" height="4"/><rect x="188.70" y="9.30" width="1" height="4"/><rect x="196.70" y="9.30" width="1" height="4"/><rect x="204.70" y="9.30" width="1" height="4"/><rect x="212.70" y="6.30" width="1" height="7"/><rect x="220.70" y="9.30" width="1" height="4"/><rect x="228.70" y="9.30" width="1" height="4"/><rect x="236.70" y="9.30" width="1" height="4"/><rect x="244.70" y="9.30" width="1" height="4"/><rect x="252.70" y="1.30" width="1" height="12"/><rect x="260.70" y="9.30" width="1" height="4"/><rect x="268.70" y="9.30" width="1" height="4"/><rect x="276.70" y="9.30" width="1" height="4"/><rect x="284.70" y="9.30" width="1" height="4"/><rect x="292.70" y="6.30" width="1" height="7"/><rect x="300.70" y="9.30" width="1" height="4"/><rect x="308.70" y="9.30" width="1" height="4"/><rect x="316.70" y="9.30" width="1" height="4"/><rect x="324.70" y="9.30" width="1" height="4"/><rect x="332.70" y="1.30" width="1" height="12"/><rect x="340.70" y="9.30" width="1" height="4"/><rect x="348.70" y="9.30" width="1" height="4"/><rect x="356.70" y="9.30" width="1" height="4"/><rect x="364.70" y="9.30" width="1" height="4"/><rect x="372.70" y="6.30" width="1" height="7"/><rect x="380.70" y="9.30" width="1" height="4"/><rect x="388.70" y="9.30" width="1" height="4"/><rect x="396.70" y="9.30" width="1" height="4"/><rect x="404.70" y="9.30" width="1" height="4"/><rect x="412.70" y="1.30" width="1" height="12"/><rect x="420.70" y="9.30" width="1" height="4"/><rect x="428.70" y="9.30" width="1" height="4"/><rect x="436.70" y="9.30" width="1" height="4"/><rect x="444.70" y="9.30" width="1" height="4"/><rect x="452.70" y="6.30" width="1" height="7"/><rect x="460.70" y="9.30" width="1" height="4"/><rect x="468.70" y="9.30" width="1" height="4"/><rect x="476.70" y="9.30" width="1" height="4"/><rect x="484.70" y="9.30" width="1" height="4"/><rect x="492.70" y="1.30" width="1" height="12"/><rect x="500.70" y="9.30" width="1" height="4"/><rect x="508.70" y="9.30" width="1" height="4"/><rect x="516.70" y="9.30" width="1" height="4"/><rect x="524.70" y="9.30" width="1" height="4"/><rect x="532.70" y="6.30" width="1" height="7"/><rect x="540.70" y="9.30" width="1" height="4"/><rect x="548.70" y="9.30" width="1" height="4"/><rect x="556.70" y="9.30" width="1" height="4"/><rect x="564.70" y="9.30" width="1" height="4"/><rect x="572.70" y="1.30" width="1" height="12"/><rect x="580.70" y="9.30" width="1" height="4"/><rect x="588.70" y="9.30" width="1" height="4"/><rect x="596.70" y="9.30" width="1" height="4"/><rect x="604.70" y="9.30" width="1" height="4"/><rect x="612.70" y="6.30" width="1" height="7"/><rect x="620.70" y="9.30" width="1" height="4"/><rect x="628.70" y="9.30" width="1" height="4"/><rect x="636.70" y="9.30" width="1" height="4"/><rect x="644.70" y="9.30" width="1" height="4"/><rect x="652.70" y="1.30" width="1" height="12"/><rect x="660.70" y="9.30" width="1" height="4"/><rect x="668.70" y="9.30" width="1" height="4"/><rect x="676.70" y="9.30" width="1" height="4"/><rect x="684.70" y="9.30" width="1" height="4"/><rect x="692.70" y="6.30" width="1" height="7"/><rect x="700.70" y="9.30" width="1" height="4"/><rect x="708.70" y="9.30" width="1" height="4"/><rect x="716.70" y="9.30" width="1" height="4"/><rect x="724.70" y="9.30" width="1" height="4"/><rect x="732.70" y="1.30" width="1" height="12"/><rect x="740.70" y="9.30" width="1" height="4"/><rect x="748.70" y="9.30" width="1" height="4"/><rect x="756.70" y="9.30" width="1" height="4"/><rect x="764.70" y="9.30" width="1" height="4"/><rect x="772.70" y="6.30" width="1" height="7"/><rect x="780.70" y="9.30" width="1" height="4"/><rect x="788.70" y="9.30" width="1" height="4"/><rect x="796.70" y="9.30" width="1" height="4"/><rect x="804.70" y="9.30" width="1" height="4"/><rect x="812.70" y="1.30" width="1" height="12"/><rect x="820.70" y="9.30" width="1" height="4"/><rect x="828.70" y="9.30" width="1" height="4"/><rect x="836.70" y="9.30" width="1" height="4"/><rect x="844.70" y="9.30" width="1" height="4"/><rect x="852.70" y="6.30" width="1" height="7"/><rect x="860.70" y="9.30" width="1" height="4"/><rect x="868.70" y="9.30" width="1" height="4"/><rect x="876.70" y="9.30" width="1" height="4"/><rect x="884.70" y="9.30" width="1" height="4"/><rect x="892.70" y="1.30" width="1" height="12"/><rect x="900.70" y="9.30" width="1" height="4"/><rect x="908.70" y="9.30" width="1" height="4"/><rect x="916.70" y="9.30" width="1" height="4"/><rect x="924.70" y="9.30" width="1" height="4"/><rect x="932.70" y="6.30" width="1" height="7"/><rect x="940.70" y="9.30" width="1" height="4"/><rect x="948.70" y="9.30" width="1" height="4"/><rect x="956.70" y="9.30" width="1" height="4"/><rect x="964.70" y="9.30" width="1" height="4"/><rect x="972.70" y="1.30" width="1" height="12"/><rect x="980.70" y="9.30" width="1" height="4"/><rect x="988.70" y="9.30" width="1" height="4"/><rect x="996.70" y="9.30" width="1" height="4"/><rect x="1004.70" y="9.30" width="1" height="4"/><rect x="1012.70" y="6.30" width="1" height="7"/><rect x="1020.70" y="9.30" width="1" height="4"/><rect x="1028.70" y="9.30" width="1" height="4"/><rect x="1036.70" y="9.30" width="1" height="4"/><rect x="1044.70" y="9.30" width="1" height="4"/><rect x="1052.70" y="1.30" width="1" height="12"/><rect x="1060.70" y="9.30" width="1" height="4"/><rect x="1068.70" y="9.30" width="1" height="4"/><rect x="1076.70" y="9.30" width="1" height="4"/><rect x="1084.70" y="9.30" width="1" height="4"/><rect x="1092.70" y="6.30" width="1" height="7"/><rect x="1100.70" y="9.30" width="1" height="4"/><rect x="1108.70" y="9.30" width="1" height="4"/><rect x="1116.70" y="9.30" width="1" height="4"/><rect x="1124.70" y="9.30" width="1" height="4"/><rect x="1132.70" y="1.30" width="1" height="12"/><rect x="1140.70" y="9.30" width="1" height="4"/><rect x="1148.70" y="9.30" width="1" height="4"/><rect x="1156.70" y="9.30" width="1" height="4"/><rect x="1164.70" y="9.30" width="1" height="4"/><rect x="1172.70" y="6.30" width="1" height="7"/><rect x="1180.70" y="9.30" width="1" height="4"/><rect x="1188.70" y="9.30" width="1" height="4"/><rect x="1196.70" y="9.30" width="1" height="4"/><rect x="1204.70" y="9.30" width="1" height="4"/><rect x="1212.70" y="1.30" width="1" height="12"/><rect x="1220.70" y="9.30" width="1" height="4"/><rect x="1228.70" y="9.30" width="1" height="4"/><rect x="1236.70" y="9.30" width="1" height="4"/><rect x="1244.70" y="9.30" width="1" height="4"/><rect x="1252.70" y="6.30" width="1" height="7"/><rect x="1260.70" y="9.30" width="1" height="4"/><rect x="1268.70" y="9.30" width="1" height="4"/><rect x="1276.70" y="9.30" width="1" height="4"/><rect x="1284.70" y="9.30" width="1" height="4"/><rect x="1292.70" y="1.30" width="1" height="12"/><rect x="1300.70" y="9.30" width="1" height="4"/><rect x="1308.70" y="9.30" width="1" height="4"/><rect x="1316.70" y="9.30" width="1" height="4"/></svg>
<svg style="left:313.5px;top:54px" width="14" height="652" viewBox="0 0 14 652" fill="#c4c4c4"><rect x="10.30" y="8.30" width="3" height="1"/><rect x="10.30" y="16.30" width="3" height="1"/><rect x="10.30" y="24.30" width="3" height="1"/><rect x="10.30" y="32.30" width="3" height="1"/><rect x="6.30" y="40.30" width="7" height="1"/><rect x="10.30" y="48.30" width="3" height="1"/><rect x="10.30" y="56.30" width="3" height="1"/><rect x="10.30" y="64.30" width="3" height="1"/><rect x="10.30" y="72.30" width="3" height="1"/><rect x="2.30" y="80.30" width="11" height="1"/><rect x="10.30" y="88.30" width="3" height="1"/><rect x="10.30" y="96.30" width="3" height="1"/><rect x="10.30" y="104.30" width="3" height="1"/><rect x="10.30" y="112.30" width="3" height="1"/><rect x="6.30" y="120.30" width="7" height="1"/><rect x="10.30" y="128.30" width="3" height="1"/><rect x="10.30" y="136.30" width="3" height="1"/><rect x="10.30" y="144.30" width="3" height="1"/><rect x="10.30" y="152.30" width="3" height="1"/><rect x="2.30" y="160.30" width="11" height="1"/><rect x="10.30" y="168.30" width="3" height="1"/><rect x="10.30" y="176.30" width="3" height="1"/><rect x="10.30" y="184.30" width="3" height="1"/><rect x="10.30" y="192.30" width="3" height="1"/><rect x="6.30" y="200.30" width="7" height="1"/><rect x="10.30" y="208.30" width="3" height="1"/><rect x="10.30" y="216.30" width="3" height="1"/><rect x="10.30" y="224.30" width="3" height="1"/><rect x="10.30" y="232.30" width="3" height="1"/><rect x="2.30" y="240.30" width="11" height="1"/><rect x="10.30" y="248.30" width="3" height="1"/><rect x="10.30" y="256.30" width="3" height="1"/><rect x="10.30" y="264.30" width="3" height="1"/><rect x="10.30" y="272.30" width="3" height="1"/><rect x="6.30" y="280.30" width="7" height="1"/><rect x="10.30" y="288.30" width="3" height="1"/><rect x="10.30" y="296.30" width="3" height="1"/><rect x="10.30" y="304.30" width="3" height="1"/><rect x="10.30" y="312.30" width="3" height="1"/><rect x="2.30" y="320.30" width="11" height="1"/><rect x="10.30" y="328.30" width="3" height="1"/><rect x="10.30" y="336.30" width="3" height="1"/><rect x="10.30" y="344.30" width="3" height="1"/><rect x="10.30" y="352.30" width="3" height="1"/><rect x="6.30" y="360.30" width="7" height="1"/><rect x="10.30" y="368.30" width="3" height="1"/><rect x="10.30" y="376.30" width="3" height="1"/><rect x="10.30" y="384.30" width="3" height="1"/><rect x="10.30" y="392.30" width="3" height="1"/><rect x="2.30" y="400.30" width="11" height="1"/><rect x="10.30" y="408.30" width="3" height="1"/><rect x="10.30" y="416.30" width="3" height="1"/><rect x="10.30" y="424.30" width="3" height="1"/><rect x="10.30" y="432.30" width="3" height="1"/><rect x="6.30" y="440.30" width="7" height="1"/><rect x="10.30" y="448.30" width="3" height="1"/><rect x="10.30" y="456.30" width="3" height="1"/><rect x="10.30" y="464.30" width="3" height="1"/><rect x="10.30" y="472.30" width="3" height="1"/><rect x="2.30" y="480.30" width="11" height="1"/><rect x="10.30" y="488.30" width="3" height="1"/><rect x="10.30" y="496.30" width="3" height="1"/><rect x="10.30" y="504.30" width="3" height="1"/><rect x="10.30" y="512.30" width="3" height="1"/><rect x="6.30" y="520.30" width="7" height="1"/><rect x="10.30" y="528.30" width="3" height="1"/><rect x="10.30" y="536.30" width="3" height="1"/><rect x="10.30" y="544.30" width="3" height="1"/><rect x="10.30" y="552.30" width="3" height="1"/><rect x="2.30" y="560.30" width="11" height="1"/><rect x="10.30" y="568.30" width="3" height="1"/><rect x="10.30" y="576.30" width="3" height="1"/><rect x="10.30" y="584.30" width="3" height="1"/><rect x="10.30" y="592.30" width="3" height="1"/><rect x="6.30" y="600.30" width="7" height="1"/><rect x="10.30" y="608.30" width="3" height="1"/><rect x="10.30" y="616.30" width="3" height="1"/><rect x="10.30" y="624.30" width="3" height="1"/><rect x="10.30" y="632.30" width="3" height="1"/><rect x="2.30" y="640.30" width="11" height="1"/></svg>
<div class="a" style="left:313.5px;top:705.5px;width:1321.5px;height:2.5px;background:#c6c6c6;"></div>
<div class="a" style="left:1634.5px;top:40px;width:5.5px;height:870px;background:#e4e4e4;border-left:1.5px solid #c4c4c4;border-right:1.5px solid #c4c4c4;"></div>
<div class="a" style="left:327.5px;top:55px;width:1307.0px;height:646px;border-top:1px dotted #b0b0b0;border-left:1px dotted #b0b0b0;border-right:1px dotted #b0b0b0;border-bottom:1px dotted #b0b0b0;"></div>
<div class="a" style="left:328px;top:56.5px;width:97.6px;height:9.3px;background:#fff;border-bottom:1px solid #e6eaf5;"></div>
<div class="t" style="left:330px;top:57.17px;font-size:7.6px;line-height:7.6px;color:#666;font-weight:normal;">XPA Component Container</div>
<div class="a" style="left:453.4px;top:68.2px;width:1054.9px;height:12.8px;border-top:1px dotted #b0b0b0;border-left:1px dotted #b0b0b0;border-right:1px dotted #b0b0b0;"></div>
<div class="a" style="left:453.4px;top:68.5px;width:38.0px;height:11.0px;background:#fff;border:1px solid #eef0f5;"></div>
<div class="t" style="left:455.9px;top:70.67px;font-size:7.6px;line-height:7.6px;color:#555;font-weight:normal;">Container</div>
<div class="a" style="left:453.4px;top:507px;width:1054.9px;height:17px;border-left:1px dotted #b0b0b0;border-right:1px dotted #b0b0b0;"></div>
<div class="a" style="left:453.4px;top:673px;width:1054.9px;height:14px;border-left:1px dotted #b0b0b0;border-right:1px dotted #b0b0b0;border-bottom:1px dotted #b0b0b0;"></div>
<div class="a" style="left:446px;top:81px;width:1069.5px;height:69.5px;border-top:1px dotted #b0b0b0;border-left:1px dotted #b0b0b0;border-right:1px dotted #b0b0b0;"></div>
<div class="a" style="left:446px;top:81.5px;width:20px;height:11.0px;background:#fff;border:1px solid #eef0f5;"></div>
<div class="t" style="left:448.5px;top:83.67px;font-size:7.6px;line-height:7.6px;color:#555;font-weight:normal;">Row</div>
<div class="a" style="left:449px;top:94.3px;width:531.5px;height:56.2px;border-top:1px dotted #b0b0b0;border-left:1px dotted #b0b0b0;"></div>
<div class="a" style="left:449px;top:94.5px;width:32px;height:11.0px;background:#fff;border:1px solid #eef0f5;"></div>
<div class="t" style="left:451.5px;top:96.67px;font-size:7.6px;line-height:7.6px;color:#555;font-weight:normal;">Column</div>
<div class="a" style="left:980.5px;top:94.3px;width:532.5px;height:56.2px;border-top:1px dotted #b0b0b0;border-left:1px dotted #b0b0b0;border-right:1px dotted #b0b0b0;"></div>
<div class="a" style="left:981px;top:94.5px;width:32px;height:11.0px;background:#fff;border:1px solid #eef0f5;"></div>
<div class="t" style="left:983.5px;top:96.67px;font-size:7.6px;line-height:7.6px;color:#555;font-weight:normal;">Column</div>
<div class="t" style="left:452.3px;top:109.69px;font-size:18.8px;line-height:18.8px;color:#2c3748;font-weight:normal;letter-spacing:0.4px;-webkit-text-stroke:0.15px #2c3748;">Event Information</div>
<div class="t" style="left:983.7px;top:109.69px;font-size:18.8px;line-height:18.8px;color:#2c3748;font-weight:normal;letter-spacing:0.35px;-webkit-text-stroke:0.15px #2c3748;">Attendees</div>
<div class="a" style="left:451px;top:139.8px;width:528px;height:1.2px;background:#c9cbd0;"></div>
<div class="a" style="left:983px;top:139.8px;width:528px;height:1.2px;background:#c9cbd0;"></div>
<div class="a" style="left:446.6px;top:478.8px;width:1069.1px;height:28.2px;border-left:1px dotted #b0b0b0;border-bottom:1px dotted #b0b0b0;"></div>
<div class="a" style="left:1400px;top:300.5px;width:115.7px;height:206.5px;border-right:1px dotted #b0b0b0;"></div>
<div class="a" style="left:449px;top:478.8px;width:1063.7px;height:14.4px;border-left:1px dotted #b0b0b0;border-bottom:1px dotted #b0b0b0;"></div>
<div class="a" style="left:1400px;top:300.5px;width:112.7px;height:192.7px;border-right:1px dotted #b0b0b0;"></div>
<div class="a" style="left:900px;top:300.5px;width:81.6px;height:28.5px;border-right:1px dotted #b0b0b0;"></div>
<div class="a" style="left:442.5px;top:150.5px;width:539.1px;height:103.3px;border-top:1px dotted #b0b0b0;border-left:1px dotted #b0b0b0;border-bottom:1px dotted #b0b0b0;"></div>
<div class="a" style="left:443px;top:151.0px;width:20px;height:11.0px;background:#fff;border:1px solid #eef0f5;"></div>
<div class="t" style="left:445.5px;top:153.17px;font-size:7.6px;line-height:7.6px;color:#555;font-weight:normal;">Row</div>
<div class="a" style="left:444.3px;top:163.4px;width:270.7px;height:75.1px;border-top:1px dotted #b0b0b0;border-left:1px dotted #b0b0b0;border-right:1px dotted #b0b0b0;border-bottom:1px dotted #b0b0b0;"></div>
<div class="a" style="left:444.8px;top:163.7px;width:32.0px;height:11.0px;background:#fff;border:1px solid #eef0f5;"></div>
<div class="t" style="left:447.3px;top:165.87px;font-size:7.6px;line-height:7.6px;color:#555;font-weight:normal;">Column</div>
<div class="a" style="left:715px;top:163.4px;width:266px;height:75.1px;border-top:1px dotted #b0b0b0;border-left:1px dotted #b0b0b0;border-bottom:1px dotted #b0b0b0;"></div>
<div class="a" style="left:715.5px;top:163.7px;width:32.0px;height:11.0px;background:#fff;border:1px solid #eef0f5;"></div>
<div class="t" style="left:718.0px;top:165.87px;font-size:7.6px;line-height:7.6px;color:#555;font-weight:normal;">Column</div>
<div class="a" style="left:442.5px;top:253.8px;width:539.1px;height:75.2px;border-top:1px dotted #b0b0b0;border-left:1px dotted #b0b0b0;border-bottom:1px dotted #b0b0b0;"></div>
<div class="a" style="left:443px;top:254.3px;width:20px;height:11.0px;background:#fff;border:1px solid #eef0f5;"></div>
<div class="t" style="left:445.5px;top:256.47px;font-size:7.6px;line-height:7.6px;color:#555;font-weight:normal;">Row</div>
<div class="a" style="left:444.3px;top:267px;width:270.7px;height:47.3px;border-top:1px dotted #b0b0b0;border-left:1px dotted #b0b0b0;border-right:1px dotted #b0b0b0;border-bottom:1px dotted #b0b0b0;"></div>
<div class="a" style="left:444.8px;top:267.3px;width:32.0px;height:11.0px;background:#fff;border:1px solid #eef0f5;"></div>
<div class="t" style="left:447.3px;top:269.47px;font-size:7.6px;line-height:7.6px;color:#555;font-weight:normal;">Column</div>
<div class="a" style="left:715px;top:267px;width:266px;height:47.3px;border-top:1px dotted #b0b0b0;border-left:1px dotted #b0b0b0;border-bottom:1px dotted #b0b0b0;"></div>
<div class="a" style="left:715.5px;top:267.3px;width:32.0px;height:11.0px;background:#fff;border:1px solid #eef0f5;"></div>
<div class="t" style="left:718.0px;top:269.47px;font-size:7.6px;line-height:7.6px;color:#555;font-weight:normal;">Column</div>
<div class="a" style="left:442.5px;top:329px;width:539.1px;height:76px;border-top:1px dotted #b0b0b0;border-left:1px dotted #b0b0b0;border-right:1px dotted #b0b0b0;border-bottom:1px dotted #b0b0b0;"></div>
<div class="a" style="left:443px;top:329.5px;width:20px;height:11.0px;background:#fff;border:1px solid #eef0f5;"></div>
<div class="t" style="left:445.5px;top:331.67px;font-size:7.6px;line-height:7.6px;color:#555;font-weight:normal;">Row</div>
<div class="a" style="left:444.3px;top:343px;width:270.7px;height:47px;border-top:1px dotted #b0b0b0;border-left:1px dotted #b0b0b0;border-right:1px dotted #b0b0b0;border-bottom:1px dotted #b0b0b0;"></div>
<div class="a" style="left:444.8px;top:343.3px;width:32.0px;height:11.0px;background:#fff;border:1px solid #eef0f5;"></div>
<div class="t" style="left:447.3px;top:345.47px;font-size:7.6px;line-height:7.6px;color:#555;font-weight:normal;">Column</div>
<div class="a" style="left:715px;top:343px;width:266px;height:47px;border-top:1px dotted #b0b0b0;border-left:1px dotted #b0b0b0;border-bottom:1px dotted #b0b0b0;"></div>
<div class="a" style="left:715.5px;top:343.3px;width:32.0px;height:11.0px;background:#fff;border:1px solid #eef0f5;"></div>
<div class="t" style="left:718.0px;top:345.47px;font-size:7.6px;line-height:7.6px;color:#555;font-weight:normal;">Column</div>
<div class="a" style="left:442.5px;top:405px;width:539.1px;height:73.8px;border-top:1px dotted #b0b0b0;border-left:1px dotted #b0b0b0;border-right:1px dotted #b0b0b0;border-bottom:1px dotted #b0b0b0;"></div>
<div class="a" style="left:443px;top:405.5px;width:20px;height:11.0px;background:#fff;border:1px solid #eef0f5;"></div>
<div class="t" style="left:445.5px;top:407.67px;font-size:7.6px;line-height:7.6px;color:#555;font-weight:normal;">Row</div>
<div class="a" style="left:444.3px;top:419px;width:270.7px;height:47.3px;border-top:1px dotted #b0b0b0;border-left:1px dotted #b0b0b0;border-right:1px dotted #b0b0b0;border-bottom:1px dotted #b0b0b0;"></div>
<div class="a" style="left:444.8px;top:419.3px;width:32.0px;height:11.0px;background:#fff;border:1px solid #eef0f5;"></div>
<div class="t" style="left:447.3px;top:421.47px;font-size:7.6px;line-height:7.6px;color:#555;font-weight:normal;">Column</div>
<div class="a" style="left:715px;top:419px;width:266px;height:47.3px;border-top:1px dotted #b0b0b0;border-left:1px dotted #b0b0b0;border-bottom:1px dotted #b0b0b0;"></div>
<div class="a" style="left:715.5px;top:419.3px;width:32.0px;height:11.0px;background:#fff;border:1px solid #eef0f5;"></div>
<div class="t" style="left:718.0px;top:421.47px;font-size:7.6px;line-height:7.6px;color:#555;font-weight:normal;">Column</div>
<div class="a" style="left:974.3px;top:150.5px;width:545.1px;height:74.2px;border-top:1px dotted #b0b0b0;border-left:1px dotted #b0b0b0;border-right:1px dotted #b0b0b0;border-bottom:1px dotted #b0b0b0;"></div>
<div class="a" style="left:975px;top:151.1px;width:20px;height:11.0px;background:#fff;border:1px solid #eef0f5;"></div>
<div class="t" style="left:977.5px;top:153.27px;font-size:7.6px;line-height:7.6px;color:#555;font-weight:normal;">Row</div>
<div class="a" style="left:977.7px;top:163.4px;width:539.3px;height:46.6px;border-top:1px dotted #b0b0b0;border-left:1px dotted #b0b0b0;border-right:1px dotted #b0b0b0;border-bottom:1px dotted #b0b0b0;"></div>
<div class="a" style="left:978.2px;top:163.7px;width:32.0px;height:11.0px;background:#fff;border:1px solid #eef0f5;"></div>
<div class="t" style="left:980.7px;top:165.87px;font-size:7.6px;line-height:7.6px;color:#555;font-weight:normal;">Column</div>
<div class="a" style="left:974.3px;top:224.7px;width:545.1px;height:75.8px;border-top:1px dotted #b0b0b0;border-left:1px dotted #b0b0b0;border-right:1px dotted #b0b0b0;border-bottom:1px dotted #b0b0b0;"></div>
<div class="a" style="left:975px;top:226.0px;width:20px;height:11.0px;background:#fff;border:1px solid #eef0f5;"></div>
<div class="t" style="left:977.5px;top:228.17px;font-size:7.6px;line-height:7.6px;color:#555;font-weight:normal;">Row</div>
<div class="a" style="left:977.7px;top:239.2px;width:539.3px;height:47.1px;border-top:1px dotted #b0b0b0;border-left:1px dotted #b0b0b0;border-right:1px dotted #b0b0b0;border-bottom:1px dotted #b0b0b0;"></div>
<div class="a" style="left:978.2px;top:239.5px;width:32.0px;height:11.0px;background:#fff;border:1px solid #eef0f5;"></div>
<div class="t" style="left:980.7px;top:241.67px;font-size:7.6px;line-height:7.6px;color:#555;font-weight:normal;">Column</div>
<div class="a" style="left:447px;top:195.3px;width:264.5px;height:30.9px;border:1px solid #cfd2d8;border-radius:4px;"></div>
<div class="a" style="left:455px;top:190px;width:39px;height:10px;background:repeating-linear-gradient(151deg,#fdfdff 0px,#e3eafc 1.6px,#fdfdff 3.2px);"></div>
<div class="t" style="left:457px;top:190.81px;font-size:9.2px;line-height:9.2px;color:#9a9da3;font-weight:normal;">Event ID</div>
<div class="t" style="left:457.5px;top:205.63px;font-size:13.2px;line-height:13.2px;color:#a0a3a8;font-weight:normal;">5</div>
<div class="a" style="left:717px;top:195.3px;width:265.7px;height:30.9px;border:1px dashed #a6a6a6;background:rgba(215,215,218,0.5);"></div>
<div class="t" style="left:727.6px;top:205.7px;font-size:12.4px;line-height:12.4px;color:#808287;font-weight:normal;">Event Type *</div>
<svg style="left:961px;top:205.5px" width="10" height="6" viewBox="0 0 10 6"><path d="M0 0h9.5L4.75 5z" fill="#6d6d6d"/></svg>
<div class="a" style="left:446.6px;top:524px;width:1069.1px;height:75.3px;border-top:1px dotted #b0b0b0;border-left:1px dotted #b0b0b0;border-right:1px dotted #b0b0b0;border-bottom:1px dotted #b0b0b0;"></div>
<div class="a" style="left:447.1px;top:524.5px;width:20.0px;height:11.0px;background:#fff;border:1px solid #eef0f5;"></div>
<div class="t" style="left:449.6px;top:526.67px;font-size:7.6px;line-height:7.6px;color:#555;font-weight:normal;">Row</div>
<div class="a" style="left:449.8px;top:537.3px;width:1062.9px;height:46.7px;border-top:1px dotted #b0b0b0;border-left:1px dotted #b0b0b0;border-right:1px dotted #b0b0b0;border-bottom:1px dotted #b0b0b0;"></div>
<div class="a" style="left:450.3px;top:537.6px;width:32.0px;height:11.0px;background:#fff;border:1px solid #eef0f5;"></div>
<div class="t" style="left:452.8px;top:539.77px;font-size:7.6px;line-height:7.6px;color:#555;font-weight:normal;">Column</div>
<div class="a" style="left:446.6px;top:599.3px;width:1069.1px;height:73.7px;border-top:1px dotted #b0b0b0;border-left:1px dotted #b0b0b0;border-right:1px dotted #b0b0b0;border-bottom:1px dotted #b0b0b0;"></div>
<div class="a" style="left:447.1px;top:599.8px;width:20.0px;height:11.0px;background:#fff;border:1px solid #eef0f5;"></div>
<div class="t" style="left:449.6px;top:601.97px;font-size:7.6px;line-height:7.6px;color:#555;font-weight:normal;">Row</div>
<div class="a" style="left:449.8px;top:613px;width:1062.9px;height:46.4px;border-top:1px dotted #b0b0b0;border-left:1px dotted #b0b0b0;border-right:1px dotted #b0b0b0;border-bottom:1px dotted #b0b0b0;"></div>
<div class="a" style="left:450.3px;top:613.3px;width:32.0px;height:11.0px;background:#fff;border:1px solid #eef0f5;"></div>
<div class="t" style="left:452.8px;top:615.47px;font-size:7.6px;line-height:7.6px;color:#555;font-weight:normal;">Column</div>
<div class="a" style="left:313.5px;top:708px;width:1321.0px;height:26px;background:#f1f1f1;"></div>
<div class="a" style="left:317.7px;top:711px;width:90.0px;height:23px;background:#6db8e2;border:1px solid #7fb9db;border-top:1px solid #a0a0a0;border-bottom:none;"></div>
<svg style="left:326px;top:717px" width="16" height="12" viewBox="0 0 16 12"><path d="M4.5 2L1 6l3.5 4M11.5 2L15 6l-3.5 4M9.3 0.8L6.7 11.2" fill="none" stroke="#fff" stroke-width="1.3"/></svg>
<div class="t" style="left:355px;top:717.92px;font-size:11.2px;line-height:11.2px;color:#fff;font-weight:normal;">Template</div>
<div class="a" style="left:412.4px;top:711px;width:101.0px;height:23px;background:#eeeeee;border:1px solid #c6c6c6;border-bottom:none;"></div>
<svg style="left:421.5px;top:716.5px" width="13" height="13" viewBox="0 0 16 16"><path d="M6.6 0h2.8l.5 2.2 1.6.9 2.1-.8 1.4 2.4-1.7 1.5v1.8l1.7 1.5-1.4 2.4-2.1-.8-1.6.9-.5 2.2H6.6l-.5-2.2-1.6-.9-2.1.8L1 11.5l1.7-1.5V8.2L1 6.7l1.4-2.4 2.1.8 1.6-.9z" fill="#555"/><circle cx="8" cy="7.7" r="2.6" fill="#eee"/></svg>
<div class="t" style="left:447px;top:717.92px;font-size:11.2px;line-height:11.2px;color:#666;font-weight:normal;">Component</div>
<div class="a" style="left:518px;top:711px;width:99px;height:23px;background:#eeeeee;border:1px solid #c6c6c6;border-bottom:none;"></div>
<svg style="left:527px;top:716.5px" width="15" height="12" viewBox="0 0 15 12"><rect x="0.6" y="0.6" width="13.8" height="10.8" fill="none" stroke="#666" stroke-width="1.2"/><path d="M2 10l4-5 3 3 2-2 3 4z" fill="#666"/><circle cx="4" cy="3.5" r="1.2" fill="#666"/></svg>
<div class="t" style="left:555px;top:717.92px;font-size:11.2px;line-height:11.2px;color:#666;font-weight:normal;">Styles</div>
<svg style="left:596px;top:716.5px" width="12" height="12" viewBox="0 0 13 13"><path d="M2 6A4.6 4.6 0 0 1 10.2 3.2M11 7A4.6 4.6 0 0 1 2.8 9.8" fill="none" stroke="#888" stroke-width="1.6"/><path d="M12.2 0.6v4.6H7.6z" fill="#888"/><path d="M0.8 12.4V7.8h4.6z" fill="#888"/></svg>
<div class="a" style="left:1499.3px;top:711px;width:131.2px;height:23px;background:#eeeeee;border:1px solid #c6c6c6;border-bottom:none;"></div>
<svg style="left:1507px;top:715.5px" width="8" height="14" viewBox="0 0 8 14"><path d="M3 0h3L4.5 5H7L2 14l1.5-6.5H1z" fill="#555"/></svg>
<div class="t" style="left:1530px;top:717.92px;font-size:11.2px;line-height:11.2px;color:#666;font-weight:normal;">Live Preview Logs</div>
<div class="a" style="left:313.5px;top:733.6px;width:1321.0px;height:4.0px;background:#0096da;"></div>
<div class="a" style="left:313.5px;top:737.6px;width:1321.0px;height:172.4px;background:#fffffe;"></div>
<div class="a" style="left:360.0px;top:739.6px;width:1.0px;height:15.2px;background:#dadada;"></div>
<div class="a" style="left:384.6px;top:739.6px;width:1.0px;height:15.2px;background:#dadada;"></div>
<div class="a" style="left:409.2px;top:739.6px;width:1.0px;height:15.2px;background:#dadada;"></div>
<div class="a" style="left:433.8px;top:739.6px;width:1.0px;height:15.2px;background:#dadada;"></div>
<div class="a" style="left:458.4px;top:739.6px;width:1.0px;height:15.2px;background:#dadada;"></div>
<div class="a" style="left:483.0px;top:739.6px;width:1.0px;height:15.2px;background:#dadada;"></div>
<div class="a" style="left:360.0px;top:754.8px;width:1.0px;height:15.2px;background:#dadada;"></div>
<div class="a" style="left:384.6px;top:754.8px;width:1.0px;height:15.2px;background:#dadada;"></div>
<div class="a" style="left:409.2px;top:754.8px;width:1.0px;height:15.2px;background:#dadada;"></div>
<div class="a" style="left:433.8px;top:754.8px;width:1.0px;height:15.2px;background:#dadada;"></div>
<div class="a" style="left:458.4px;top:754.8px;width:1.0px;height:15.2px;background:#dadada;"></div>
<div class="a" style="left:483.0px;top:754.8px;width:1.0px;height:15.2px;background:#dadada;"></div>
<div class="a" style="left:507.6px;top:754.8px;width:1.0px;height:15.2px;background:#dadada;"></div>
<div class="a" style="left:360.0px;top:770.0px;width:1.0px;height:15.2px;background:#dadada;"></div>
<div class="a" style="left:384.6px;top:770.0px;width:1.0px;height:15.2px;background:#dadada;"></div>
<div class="a" style="left:409.2px;top:770.0px;width:1.0px;height:15.2px;background:#dadada;"></div>
<div class="a" style="left:433.8px;top:770.0px;width:1.0px;height:15.2px;background:#dadada;"></div>
<div class="a" style="left:458.4px;top:770.0px;width:1.0px;height:15.2px;background:#dadada;"></div>
<div class="a" style="left:483.0px;top:770.0px;width:1.0px;height:15.2px;background:#dadada;"></div>
<div class="a" style="left:360.0px;top:785.2px;width:1.0px;height:15.2px;background:#dadada;"></div>
<div class="a" style="left:384.6px;top:785.2px;width:1.0px;height:15.2px;background:#dadada;"></div>
<div class="a" style="left:409.2px;top:785.2px;width:1.0px;height:15.2px;background:#dadada;"></div>
<div class="a" style="left:433.8px;top:785.2px;width:1.0px;height:15.2px;background:#dadada;"></div>
<div class="a" style="left:458.4px;top:785.2px;width:1.0px;height:15.2px;background:#dadada;"></div>
<div class="a" style="left:360.0px;top:800.4px;width:1.0px;height:15.2px;background:#dadada;"></div>
<div class="a" style="left:384.6px;top:800.4px;width:1.0px;height:15.2px;background:#dadada;"></div>
<div class="a" style="left:409.2px;top:800.4px;width:1.0px;height:15.2px;background:#dadada;"></div>
<div class="a" style="left:433.8px;top:800.4px;width:1.0px;height:15.2px;background:#dadada;"></div>
<div class="a" style="left:458.4px;top:800.4px;width:1.0px;height:15.2px;background:#dadada;"></div>
<div class="a" style="left:360.0px;top:815.6px;width:1.0px;height:15.2px;background:#dadada;"></div>
<div class="a" style="left:384.6px;top:815.6px;width:1.0px;height:15.2px;background:#dadada;"></div>
<div class="a" style="left:409.2px;top:815.6px;width:1.0px;height:15.2px;background:#dadada;"></div>
<div class="a" style="left:433.8px;top:815.6px;width:1.0px;height:15.2px;background:#dadada;"></div>
<div class="a" style="left:458.4px;top:815.6px;width:1.0px;height:15.2px;background:#dadada;"></div>
<div class="a" style="left:483.0px;top:815.6px;width:1.0px;height:15.2px;background:#dadada;"></div>
<div class="a" style="left:360.0px;top:830.8px;width:1.0px;height:15.2px;background:#dadada;"></div>
<div class="a" style="left:384.6px;top:830.8px;width:1.0px;height:15.2px;background:#dadada;"></div>
<div class="a" style="left:409.2px;top:830.8px;width:1.0px;height:15.2px;background:#dadada;"></div>
<div class="a" style="left:433.8px;top:830.8px;width:1.0px;height:15.2px;background:#dadada;"></div>
<div class="a" style="left:458.4px;top:830.8px;width:1.0px;height:15.2px;background:#dadada;"></div>
<div class="a" style="left:483.0px;top:830.8px;width:1.0px;height:15.2px;background:#dadada;"></div>
<div class="a" style="left:507.6px;top:830.8px;width:1.0px;height:15.2px;background:#dadada;"></div>
<div class="a" style="left:360.0px;top:846.0px;width:1.0px;height:15.2px;background:#dadada;"></div>
<div class="a" style="left:384.6px;top:846.0px;width:1.0px;height:15.2px;background:#dadada;"></div>
<div class="a" style="left:409.2px;top:846.0px;width:1.0px;height:15.2px;background:#dadada;"></div>
<div class="a" style="left:433.8px;top:846.0px;width:1.0px;height:15.2px;background:#dadada;"></div>
<div class="a" style="left:458.4px;top:846.0px;width:1.0px;height:15.2px;background:#dadada;"></div>
<div class="a" style="left:483.0px;top:846.0px;width:1.0px;height:15.2px;background:#dadada;"></div>
<div class="a" style="left:507.6px;top:846.0px;width:1.0px;height:15.2px;background:#dadada;"></div>
<div class="a" style="left:532.2px;top:846.0px;width:1.0px;height:15.2px;background:#dadada;"></div>
<div class="a" style="left:360.0px;top:861.2px;width:1.0px;height:15.2px;background:#dadada;"></div>
<div class="a" style="left:384.6px;top:861.2px;width:1.0px;height:15.2px;background:#dadada;"></div>
<div class="a" style="left:409.2px;top:861.2px;width:1.0px;height:15.2px;background:#dadada;"></div>
<div class="a" style="left:433.8px;top:861.2px;width:1.0px;height:15.2px;background:#dadada;"></div>
<div class="a" style="left:458.4px;top:861.2px;width:1.0px;height:15.2px;background:#dadada;"></div>
<div class="a" style="left:483.0px;top:861.2px;width:1.0px;height:15.2px;background:#dadada;"></div>
<div class="a" style="left:507.6px;top:861.2px;width:1.0px;height:15.2px;background:#dadada;"></div>
<div class="a" style="left:360.0px;top:876.4px;width:1.0px;height:15.2px;background:#dadada;"></div>
<div class="a" style="left:384.6px;top:876.4px;width:1.0px;height:15.2px;background:#dadada;"></div>
<div class="a" style="left:409.2px;top:876.4px;width:1.0px;height:15.2px;background:#dadada;"></div>
<div class="a" style="left:433.8px;top:876.4px;width:1.0px;height:15.2px;background:#dadada;"></div>
<div class="a" style="left:458.4px;top:876.4px;width:1.0px;height:15.2px;background:#dadada;"></div>
<div class="a" style="left:483.0px;top:876.4px;width:1.0px;height:15.2px;background:#dadada;"></div>
<div class="a" style="left:507.6px;top:876.4px;width:1.0px;height:15.2px;background:#dadada;"></div>
<div class="a" style="left:360.0px;top:891.6px;width:1.0px;height:18.2px;background:#dadada;"></div>
<div class="a" style="left:384.6px;top:891.6px;width:1.0px;height:18.2px;background:#dadada;"></div>
<div class="a" style="left:409.2px;top:891.6px;width:1.0px;height:18.2px;background:#dadada;"></div>
<div class="a" style="left:433.8px;top:891.6px;width:1.0px;height:18.2px;background:#dadada;"></div>
<div class="a" style="left:458.4px;top:891.6px;width:1.0px;height:18.2px;background:#dadada;"></div>
<div class="a" style="left:483.0px;top:891.6px;width:1.0px;height:18.2px;background:#dadada;"></div>
<div class="m" style="left:508.20px;top:740.60px;font-size:10.25px;line-height:15.2px;letter-spacing:0.000px"><span style="color:#808080">&lt;</span><span style="color:#962a2a">input</span> <span style="color:#e50000">matInput</span> <span style="color:#000000">[</span><span style="color:#e50000">magic</span><span style="color:#000000">]</span><span style="color:#808080">=</span><span style="color:#0000ff">"mgc.Event_ID"</span> <span style="color:#000000">[</span><span style="color:#e50000">formControlName</span><span style="color:#000000">]</span><span style="color:#808080">=</span><span style="color:#0000ff">"mgc.Event_ID"</span><span style="color:#808080">&gt;</span></div>
<div class="m" style="right:1576.10px;top:740.60px;font-size:10.25px;line-height:15.2px;color:#2a8aab;text-align:right">8</div>
<div class="m" style="left:532.80px;top:755.80px;font-size:10.25px;line-height:15.2px;letter-spacing:0.000px"><span style="color:#808080">&lt;</span><span style="color:#962a2a">mat-label</span><span style="color:#808080">&gt;</span><span style="color:#000000">Event ID</span><span style="color:#808080">&lt;/</span><span style="color:#962a2a">mat-label</span><span style="color:#808080">&gt;</span></div>
<div class="m" style="right:1576.10px;top:755.80px;font-size:10.25px;line-height:15.2px;color:#2a8aab;text-align:right">9</div>
<div class="m" style="left:508.20px;top:771.00px;font-size:10.25px;line-height:15.2px;letter-spacing:0.000px"><span style="color:#808080">&lt;/</span><span style="color:#962a2a">mat-form-field</span><span style="color:#808080">&gt;</span></div>
<div class="m" style="right:1576.10px;top:771.00px;font-size:10.25px;line-height:15.2px;color:#2a8aab;text-align:right">10</div>
<div class="m" style="left:483.60px;top:786.20px;font-size:10.25px;line-height:15.2px;letter-spacing:0.000px"><span style="color:#808080">&lt;/</span><span style="color:#962a2a">c-col</span><span style="color:#808080">&gt;</span></div>
<div class="m" style="right:1576.10px;top:786.20px;font-size:10.25px;line-height:15.2px;color:#2a8aab;text-align:right">11</div>
<div class="m" style="left:483.60px;top:801.40px;font-size:10.25px;line-height:15.2px;letter-spacing:0.000px"><span style="color:#808080">&lt;</span><span style="color:#962a2a">c-col</span> <span style="color:#e50000">data-comp-id</span><span style="color:#808080">=</span><span style="color:#0000ff">"c-column.3"</span> <span style="color:#e50000">id</span><span style="color:#808080">=</span><span style="color:#0000ff">"c-column.4"</span><span style="color:#808080">&gt;</span></div>
<div class="m" style="right:1576.10px;top:801.40px;font-size:10.25px;line-height:15.2px;color:#2a8aab;text-align:right">12</div>
<div class="m" style="left:508.20px;top:816.60px;font-size:10.25px;line-height:15.2px;letter-spacing:0.000px"><span style="color:#808080">&lt;</span><span style="color:#962a2a">mat-form-field</span> <span style="color:#e50000">appearance</span><span style="color:#808080">=</span><span style="color:#0000ff">"outline"</span> <span style="color:#e50000">data-comp-id</span><span style="color:#808080">=</span><span style="color:#0000ff">"mat-select-input.1"</span> <span style="color:#e50000">id</span><span style="color:#808080">=</span><span style="color:#0000ff">"mat-select-input.1"</span><span style="color:#808080">&gt;</span></div>
<div class="m" style="right:1576.10px;top:816.60px;font-size:10.25px;line-height:15.2px;color:#2a8aab;text-align:right">13</div>
<div class="m" style="left:532.80px;top:831.80px;font-size:10.25px;line-height:15.2px;letter-spacing:0.000px"><span style="color:#808080">&lt;</span><span style="color:#962a2a">mat-select</span> <span style="color:#000000">[</span><span style="color:#e50000">magic</span><span style="color:#000000">]</span><span style="color:#808080">=</span><span style="color:#0000ff">"mgc.ComboEventType"</span> <span style="color:#000000">[</span><span style="color:#e50000">formControlName</span><span style="color:#000000">]</span><span style="color:#808080">=</span><span style="color:#0000ff">"mgc.ComboEventType"</span> <span style="color:#e50000">required</span><span style="color:#808080">&gt;</span></div>
<div class="m" style="right:1576.10px;top:831.80px;font-size:10.25px;line-height:15.2px;color:#2a8aab;text-align:right">14</div>
<div class="m" style="left:557.40px;top:847.00px;font-size:10.25px;line-height:15.2px;letter-spacing:0.000px"><span style="color:#808080">&lt;</span><span style="color:#962a2a">mat-option</span> <span style="color:#000000">[</span><span style="color:#e50000">value</span><span style="color:#000000">]</span><span style="color:#808080">=</span><span style="color:#0000ff">"item.index"</span> <span style="color:#e50000">*ngFor</span><span style="color:#808080">=</span><span style="color:#0000ff">"let item of mg.getItemListValues(mgc.ComboEventType)"</span><span style="color:#808080">&gt;</span><span style="color:#000000">{{ item.displayValue }}</span><span style="color:#808080">&lt;/</span><span style="color:#962a2a">mat-option</span><span style="color:#808080">&gt;</span></div>
<div class="m" style="right:1576.10px;top:847.00px;font-size:10.25px;line-height:15.2px;color:#2a8aab;text-align:right">15</div>
<div class="m" style="left:532.80px;top:862.20px;font-size:10.25px;line-height:15.2px;letter-spacing:0.000px"><span style="color:#808080">&lt;/</span><span style="color:#962a2a">mat-select</span><span style="color:#808080">&gt;</span></div>
<div class="m" style="right:1576.10px;top:862.20px;font-size:10.25px;line-height:15.2px;color:#2a8aab;text-align:right">16</div>
<div class="m" style="left:532.80px;top:877.40px;font-size:10.25px;line-height:15.2px;letter-spacing:0.000px"><span style="color:#808080">&lt;</span><span style="color:#962a2a">mat-label</span><span style="color:#808080">&gt;</span><span style="color:#000000">Event Type</span><span style="color:#808080">&lt;/</span><span style="color:#962a2a">mat-label</span><span style="color:#808080">&gt;</span></div>
<div class="m" style="right:1576.10px;top:877.40px;font-size:10.25px;line-height:15.2px;color:#2a8aab;text-align:right">17</div>
<div class="m" style="left:508.20px;top:892.60px;font-size:10.25px;line-height:15.2px;letter-spacing:0.000px"><span style="color:#808080">&lt;/</span><span style="color:#962a2a">mat-form-field</span><span style="color:#808080">&gt;</span></div>
<div class="m" style="right:1576.10px;top:892.60px;font-size:10.25px;line-height:15.2px;color:#2a8aab;text-align:right">18</div>
<div class="a" style="left:1630.5px;top:738px;width:1.0px;height:172px;background:#e8e8e8;"></div>
<div class="a" style="left:1630.7px;top:756.5px;width:3.3px;height:33.0px;background:#c1c1c1;"></div>
<div class="a" style="left:1640px;top:40px;width:279px;height:870px;background:#f3f3f3;"></div>
<div class="a" style="left:1643px;top:44px;width:78px;height:22px;background:#eeeeee;border:1px solid #c4c4c4;border-bottom:none;"></div>
<svg style="left:1652.5px;top:49px" width="13" height="14" viewBox="0 0 13 14"><ellipse cx="6.5" cy="2.2" rx="6.2" ry="2" fill="#777"/><path d="M0.3 4.5c0 2.6 12.4 2.6 12.4 0v2c0 2.6-12.4 2.6-12.4 0zM0.3 8c0 2.6 12.4 2.6 12.4 0v2c0 2.6-12.4 2.6-12.4 0zM0.3 11.4c0 2.6 12.4 2.6 12.4 0v0.6c0 2.6-12.4 2.6-12.4 0z" fill="#777"/></svg>
<div class="t" style="left:1677.5px;top:48.5px;width:34.5px;overflow:hidden;font-size:11.5px;line-height:16px;color:#888">Models</div>
<div class="a" style="left:1724.5px;top:44px;width:77.5px;height:22px;background:#eeeeee;border:1px solid #c4c4c4;border-bottom:none;"></div>
<svg style="left:1733px;top:50px" width="14" height="12" viewBox="0 0 14 12"><rect x="5.5" y="0" width="3" height="3" fill="#666"/><path d="M7 3v3M2 6h10M2 6v2M7 6v2M12 6v2" stroke="#666" stroke-width="1.2" fill="none"/><rect x="0" y="8" width="3.6" height="4" fill="#666"/><rect x="5.2" y="8" width="3.6" height="4" fill="#666"/><rect x="10.4" y="8" width="3.6" height="4" fill="#666"/></svg>
<div class="t" style="left:1760px;top:48.5px;width:34px;overflow:hidden;font-size:11.5px;line-height:16px;color:#888">Outline</div>
<div class="a" style="left:1806.4px;top:44px;width:111.6px;height:22px;background:#6db8e2;border:1px solid #8cc3e3;border-top:1px solid #a2a2a2;border-bottom:none;"></div>
<svg style="left:1815px;top:50px" width="15" height="11" viewBox="0 0 15 11"><path d="M0 1h2M4 1h11M0 4h2M4 4h11M0 7h2M4 7h11M0 10h2M4 10h11" stroke="#fff" stroke-width="1.6"/></svg>
<div class="t" style="left:1842px;top:48.5px;width:69px;overflow:hidden;font-size:11.5px;line-height:16px;color:#fff">PropertySheet</div>
<div class="a" style="left:1640px;top:66px;width:279px;height:4px;background:#0096da;"></div>
<div class="a" style="left:1640px;top:70px;width:279px;height:20px;background:#d7d7d7;"></div>
<div class="t" style="left:1648px;top:77.02px;font-size:11.2px;line-height:11.2px;color:#151515;font-weight:normal;">Select Input</div>
<svg style="left:1901.5px;top:76px" width="9" height="12" viewBox="0 0 9 12"><rect x="0" y="1" width="9" height="1.5" fill="#1f8ad6"/><rect x="3" y="0" width="3" height="1.2" fill="#1f8ad6"/><path d="M1 3h7l-0.6 9H1.6z" fill="#1f8ad6"/><path d="M3 4.5v6M4.5 4.5v6M6 4.5v6" stroke="#9fd0f2" stroke-width=".6"/></svg>
<div class="a" style="left:1640px;top:96.2px;width:279px;height:17.6px;background:#e6e6e6;"></div>
<svg style="left:1645.6px;top:101.70px" width="9" height="6" viewBox="0 0 9 6"><path d="M0 0h8.5L4.25 5.7z" fill="#8a8a8a"/></svg>
<div class="t" style="left:1661.5px;top:100.07px;font-size:9.6px;line-height:9.6px;color:#222;font-weight:bold;">Events &amp; Data</div>
<div class="t" style="right:219.5px;top:123.2px;font-size:9.8px;line-height:9.8px;color:#1c1c1c;font-weight:normal;">Data</div>
<div class="a" style="left:1708px;top:120.4px;width:189.5px;height:16.1px;background:#fff;border:1px solid #b5b5b5;border-top-color:#a9a9a9;"></div>
<div class="t" style="left:1711.5px;top:123.9px;font-size:9.8px;line-height:9.8px;color:#222;font-weight:normal;">mgc.ComboEventType</div>
<div class="a" style="left:1897px;top:120.4px;width:15.5px;height:16.1px;background:linear-gradient(#f6f6f6,#e2e2e2);border:1px solid #b5b5b5;"></div>
<svg style="left:1900px;top:123.40px" width="10" height="10" viewBox="0 0 16 16"><path d="M6.6 0h2.8l.5 2.2 1.6.9 2.1-.8 1.4 2.4-1.7 1.5v1.8l1.7 1.5-1.4 2.4-2.1-.8-1.6.9-.5 2.2H6.6l-.5-2.2-1.6-.9-2.1.8L1 11.5l1.7-1.5V8.2L1 6.7l1.4-2.4 2.1.8 1.6-.9z" fill="#111"/><circle cx="8" cy="7.9" r="2.8" fill="#fff"/></svg>
<div class="t" style="right:219.5px;top:142.2px;font-size:9.8px;line-height:9.8px;color:#1c1c1c;font-weight:normal;">Label</div>
<div class="a" style="left:1708px;top:139.4px;width:189.5px;height:16.2px;background:#fff;border:1px solid #b5b5b5;border-top-color:#a9a9a9;"></div>
<div class="t" style="left:1711.5px;top:142.9px;font-size:9.8px;line-height:9.8px;color:#222;font-weight:normal;">Event Type</div>
<div class="a" style="left:1897px;top:139.4px;width:15.5px;height:16.2px;background:linear-gradient(#f6f6f6,#e2e2e2);border:1px solid #b5b5b5;"></div>
<svg style="left:1900px;top:142.40px" width="10" height="10" viewBox="0 0 16 16"><path d="M6.6 0h2.8l.5 2.2 1.6.9 2.1-.8 1.4 2.4-1.7 1.5v1.8l1.7 1.5-1.4 2.4-2.1-.8-1.6.9-.5 2.2H6.6l-.5-2.2-1.6-.9-2.1.8L1 11.5l1.7-1.5V8.2L1 6.7l1.4-2.4 2.1.8 1.6-.9z" fill="#111"/><circle cx="8" cy="7.9" r="2.8" fill="#fff"/></svg>
<div class="t" style="right:219.5px;top:160.5px;font-size:9.8px;line-height:9.8px;color:#1c1c1c;font-weight:normal;">Error</div>
<div class="a" style="left:1708px;top:158.4px;width:189.5px;height:16.2px;background:#fff;border:1px solid #b5b5b5;border-top-color:#a9a9a9;"></div>
<div class="a" style="left:1897px;top:158.4px;width:15.5px;height:16.2px;background:linear-gradient(#f6f6f6,#e2e2e2);border:1px solid #b5b5b5;"></div>
<svg style="left:1900px;top:161.40px" width="10" height="10" viewBox="0 0 16 16"><path d="M6.6 0h2.8l.5 2.2 1.6.9 2.1-.8 1.4 2.4-1.7 1.5v1.8l1.7 1.5-1.4 2.4-2.1-.8-1.6.9-.5 2.2H6.6l-.5-2.2-1.6-.9-2.1.8L1 11.5l1.7-1.5V8.2L1 6.7l1.4-2.4 2.1.8 1.6-.9z" fill="#111"/><circle cx="8" cy="7.9" r="2.8" fill="#fff"/></svg>
<div class="t" style="right:219.5px;top:180.7px;font-size:9.8px;line-height:9.8px;color:#1c1c1c;font-weight:normal;">Multi Select?</div>
<div class="a" style="left:1708px;top:179.2px;width:12.5px;height:12.5px;background:#fff;border:1px solid #999;border-radius:2px;"></div>
<div class="t" style="right:219.5px;top:197.2px;font-size:9.8px;line-height:9.8px;color:#1c1c1c;font-weight:normal;">Id</div>
<div class="a" style="left:1708px;top:194.8px;width:204.5px;height:15.7px;background:#fff;border:1px solid #b5b5b5;border-top-color:#a9a9a9;"></div>
<div class="t" style="left:1711.5px;top:198.3px;font-size:9.8px;line-height:9.8px;color:#222;font-weight:normal;">mat-select-input.1</div>
<div class="a" style="left:1640px;top:220.5px;width:279px;height:16.5px;background:#e6e6e6;"></div>
<svg style="left:1645.6px;top:226.00px" width="9" height="6" viewBox="0 0 9 6"><path d="M0 0h8.5L4.25 5.7z" fill="#8a8a8a"/></svg>
<div class="t" style="left:1661.5px;top:224.37px;font-size:9.6px;line-height:9.6px;color:#222;font-weight:bold;">Table Actions</div>
<div class="t" style="left:1646.5px;top:246.2px;font-size:9.8px;line-height:9.8px;color:#1c1c1c;font-weight:normal;">Is Inside Table</div>
<div class="a" style="left:1713.6px;top:245px;width:12.5px;height:12.5px;background:#fff;border:1px solid #999;border-radius:2px;"></div>
<div class="t" style="left:1649px;top:264.1px;font-size:9.8px;line-height:9.8px;color:#1c1c1c;font-weight:normal;">Show Control</div>
<div class="a" style="left:1713.5px;top:260.5px;width:199.0px;height:16.0px;background:#fff;border:1px solid #b5b5b5;border-top-color:#a9a9a9;"></div>
<svg style="left:1902.5px;top:268.00px" width="6" height="4" viewBox="0 0 6 4"><path d="M0 0h6L3 3.5z" fill="#333"/></svg>
<div class="t" style="left:1717px;top:264.1px;font-size:9.8px;line-height:9.8px;color:#222;font-weight:normal;">None</div>
<div class="a" style="left:1640px;top:285.8px;width:279px;height:16.9px;background:#e6e6e6;"></div>
<svg style="left:1645.6px;top:291.30px" width="9" height="6" viewBox="0 0 9 6"><path d="M0 0h8.5L4.25 5.7z" fill="#8a8a8a"/></svg>
<div class="t" style="left:1661.5px;top:289.67px;font-size:9.6px;line-height:9.6px;color:#222;font-weight:bold;">Display Logic</div>
<div class="t" style="right:222px;top:312.2px;font-size:9.8px;line-height:9.8px;color:#1c1c1c;font-weight:normal;">Required</div>
<div class="a" style="left:1705px;top:311px;width:12px;height:12px;background:#1f7fe0;border-radius:2px;"></div>
<svg style="left:1706.5px;top:313px" width="9" height="8" viewBox="0 0 9 8"><path d="M1 4l2.5 2.5L8 1" fill="none" stroke="#fff" stroke-width="1.8"/></svg>
<div class="t" style="right:222px;top:329.5px;font-size:9.8px;line-height:9.8px;color:#1c1c1c;font-weight:normal;">ToolTip</div>
<div class="a" style="left:1705px;top:326.5px;width:192.5px;height:16.0px;background:#fff;border:1px solid #b5b5b5;border-top-color:#a9a9a9;"></div>
<div class="a" style="left:1897px;top:326.5px;width:15.5px;height:16.0px;background:linear-gradient(#f6f6f6,#e2e2e2);border:1px solid #b5b5b5;"></div>
<svg style="left:1900px;top:329.50px" width="10" height="10" viewBox="0 0 16 16"><path d="M6.6 0h2.8l.5 2.2 1.6.9 2.1-.8 1.4 2.4-1.7 1.5v1.8l1.7 1.5-1.4 2.4-2.1-.8-1.6.9-.5 2.2H6.6l-.5-2.2-1.6-.9-2.1.8L1 11.5l1.7-1.5V8.2L1 6.7l1.4-2.4 2.1.8 1.6-.9z" fill="#111"/><circle cx="8" cy="7.9" r="2.8" fill="#fff"/></svg>
<div class="t" style="right:222.4px;top:348.2px;font-size:9.8px;line-height:9.8px;color:#1c1c1c;font-weight:normal;">Appearance</div>
<div class="a" style="left:1704.5px;top:345.3px;width:208.0px;height:16.1px;background:#fff;border:1px solid #b5b5b5;border-top-color:#a9a9a9;"></div>
<div class="t" style="left:1708.0px;top:348.8px;font-size:9.8px;line-height:9.8px;color:#222;font-weight:normal;">Outline</div>
<svg style="left:1902.5px;top:352.80px" width="6" height="4" viewBox="0 0 6 4"><path d="M0 0h6L3 3.5z" fill="#333"/></svg>
<div class="t" style="right:222.4px;top:367.2px;font-size:9.8px;line-height:9.8px;color:#1c1c1c;font-weight:normal;">Display If</div>
<div class="a" style="left:1704.5px;top:364.6px;width:193.0px;height:15.9px;background:#fff;border:1px solid #b5b5b5;border-top-color:#a9a9a9;"></div>
<div class="a" style="left:1897px;top:364.6px;width:15.5px;height:15.9px;background:linear-gradient(#f6f6f6,#e2e2e2);border:1px solid #b5b5b5;"></div>
<svg style="left:1900px;top:367.60px" width="10" height="10" viewBox="0 0 16 16"><path d="M6.6 0h2.8l.5 2.2 1.6.9 2.1-.8 1.4 2.4-1.7 1.5v1.8l1.7 1.5-1.4 2.4-2.1-.8-1.6.9-.5 2.2H6.6l-.5-2.2-1.6-.9-2.1.8L1 11.5l1.7-1.5V8.2L1 6.7l1.4-2.4 2.1.8 1.6-.9z" fill="#111"/><circle cx="8" cy="7.9" r="2.8" fill="#fff"/></svg>
<div class="a" style="left:1640px;top:390.2px;width:279px;height:16.4px;background:#e6e6e6;"></div>
<svg style="left:1645.6px;top:395.70px" width="9" height="6" viewBox="0 0 9 6"><path d="M0 0h8.5L4.25 5.7z" fill="#8a8a8a"/></svg>
<div class="t" style="left:1661.5px;top:394.07px;font-size:9.6px;line-height:9.6px;color:#222;font-weight:bold;">Styling Overrides</div>
<div class="t" style="left:1646.5px;top:416.7px;font-size:9.8px;line-height:9.8px;color:#1c1c1c;font-weight:normal;">Class</div>
<div class="a" style="left:1676.8px;top:414.1px;width:236.2px;height:22.8px;background:#fff;border:1px solid #b5b5b5;"></div>
<div class="t" style="left:1681px;top:419.77px;font-size:11.5px;line-height:11.5px;color:#8a8a8a;font-weight:normal;">Select class...</div>
<div class="a" style="left:1640px;top:451.9px;width:279px;height:16.8px;background:#e6e6e6;"></div>
<svg style="left:1645.6px;top:457.40px" width="9" height="6" viewBox="0 0 9 6"><path d="M0 0h8.5L4.25 5.7z" fill="#8a8a8a"/></svg>
<div class="t" style="left:1661.5px;top:455.77px;font-size:9.6px;line-height:9.6px;color:#222;font-weight:bold;">Dynamic Properties</div>
<svg style="left:1647.5px;top:478.5px" width="11" height="11" viewBox="0 0 11 11"><path d="M5.5 0v11M0 5.5h11" stroke="#111" stroke-width="2.4"/></svg>
<div class="t" style="left:1664.3px;top:479.03px;font-size:10.6px;line-height:10.6px;color:#222;font-weight:normal;">Add New Property</div>
<div class="a" style="left:1633px;top:89px;width:286px;height:84px;border:10px solid #fdd03f;"></div>
<div class="a" style="left:1634.4px;top:259.6px;width:284.6px;height:83.4px;border:10px solid #fdd03f;"></div></body></html>
